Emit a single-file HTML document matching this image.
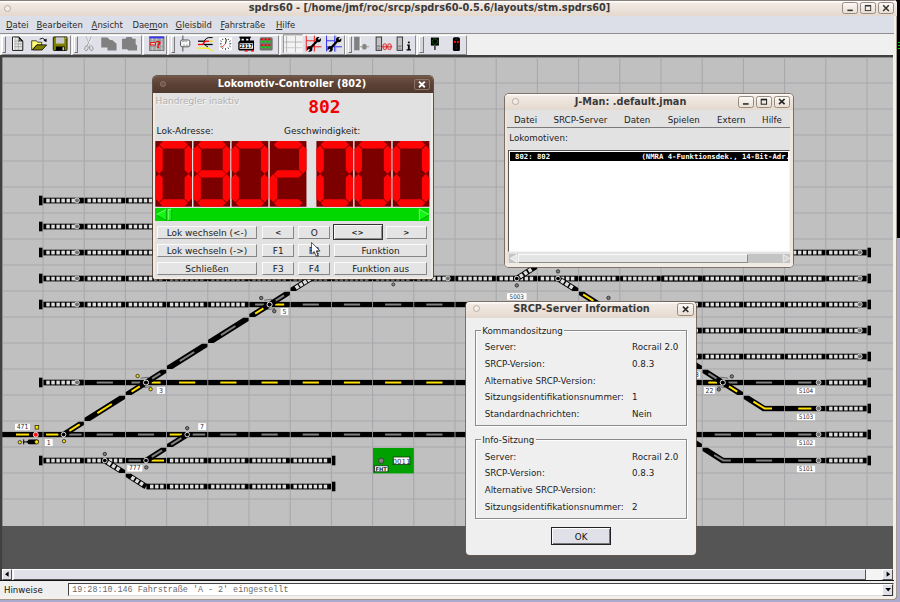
<!DOCTYPE html>
<html lang="de"><head><meta charset="utf-8"><title>spdrs60</title>
<style>
*{box-sizing:border-box;margin:0;padding:0}
html,body{width:900px;height:602px;overflow:hidden}
body{position:relative;background:#a9aace;font-family:"DejaVu Sans","Liberation Sans",sans-serif;font-size:8.4px;color:#1a1a1a;line-height:1}
.abs,.abs div,.abs svg{position:absolute}
.t{position:absolute;white-space:pre;line-height:1}
u{text-decoration:underline;text-underline-offset:1.1px;text-decoration-thickness:0.6px}
/* main window */
#bgblack{left:896px;top:0;width:4px;height:238px;background:#000}
#main{left:0;top:0;width:896.8px;height:600.2px;background:#f5f0ea;border-radius:0 4px 4px 0;overflow:hidden;box-shadow:inset -0.7px -0.7px 0 #8a7a6e}
#mtitle{left:0;top:0;width:897px;height:16.3px;background:linear-gradient(#fff 0,#fff 1px,#f1e9e3 2px,#ece3db 50%,#e5d9ce 100%);border-top:1px solid #8a8078}
#mtitle .cap{left:0;width:859px;top:2.2px;text-align:center;font-weight:bold;font-size:9.75px;color:#3a3a3a;white-space:pre}
.knob{width:7px;height:7px;border-radius:50%;border:1px solid #b9aca2;background:#f4ede7}
/*wbtn*/.wbtn{height:12.3px;width:16px;border:1px solid #978b82;border-radius:2.5px;background:linear-gradient(#fbf8f5,#e9dfd5)}
#menubar{left:0;top:16.3px;width:893.6px;height:17.1px;background:#dddfe8}
#menubar .t{top:4.6px;font-size:8.45px;color:#2a2a2a}
#tbarea{left:0;top:33.4px;width:893.6px;height:21.4px;background:#f0f0f0;border-top:1px solid #8f8f8f}
.tb{top:0.6px;height:20.2px;background:#dfe0e8;border-left:1px solid #fff;border-top:1px solid #fff;border-right:1px solid #8a8a8a;border-bottom:1px solid #8a8a8a}
.grip{top:1.6px;width:4.3px;height:16.6px;border-left:1.3px solid #fff;border-top:0.6px solid #fff;border-right:0.9px solid #7c7c7c;border-bottom:0.8px solid #707070;background:#d6d6da}
#canvas{left:0;top:54.6px;width:893.4px;overflow:hidden;height:515px;background:#c0c0c0}
#dark{left:0;top:525px;width:894px;height:45px;background:#555}
#hscroll{left:2px;top:569.4px;width:891px;height:11px;background:#f4f4f4}
#status{left:0;top:580.4px;width:893.6px;height:16.4px;background:#efefef;border-top:1.2px solid #111}
</style></head><body>
<div id="bgblack" class="abs"><div style="left:1.6px;top:42px;width:2.4px;height:0.9px;background:#0c0"></div><div style="left:1.6px;top:44.8px;width:2.4px;height:0.9px;background:#0c0"></div><div style="left:1.6px;top:47.6px;width:2.4px;height:0.9px;background:#0c0"></div></div>
<div id="main" class="abs">
  <div id="mtitle"><div class="knob" style="left:4.4px;top:4px"></div>
    <div class="cap">spdrs60 - [/home/jmf/roc/srcp/spdrs60-0.5.6/layouts/stm.spdrs60]</div>
    <div class="wbtn" style="left:841.6px;top:1px"><svg width="16" height="12" style="left:-1px;top:-1px"><rect x="5.4" y="7.6" width="5.4" height="1.5" fill="#333"/></svg></div>
    <div class="wbtn" style="left:859.6px;top:1px"><svg width="16" height="12" style="left:-1px;top:-1px"><rect x="5.3" y="3.4" width="5.4" height="5.2" fill="none" stroke="#333" stroke-width="0.9"/><rect x="5.3" y="3" width="5.4" height="1.5" fill="#333"/></svg></div>
    <div class="wbtn" style="left:877.8px;top:1px"><svg width="16" height="12" style="left:-1px;top:-1px"><path d="M5.2,3.2 L10.8,9 M10.8,3.2 L5.2,9" stroke="#333" stroke-width="1.5"/></svg></div>
  </div>
  <div id="menubar">
    <span class="t" style="left:6px"><u>D</u>atei</span>
    <span class="t" style="left:36.5px"><u>B</u>earbeiten</span>
    <span class="t" style="left:91.6px"><u>A</u>nsicht</span>
    <span class="t" style="left:132.4px">Dae<u>m</u>on</span>
    <span class="t" style="left:175.6px"><u>G</u>leisbild</span>
    <span class="t" style="left:220.4px"><u>F</u>ahrstraße</span>
    <span class="t" style="left:276px"><u>H</u>ilfe</span>
  </div>
  <div id="tbarea">
    <div class="tb" style="left:0.6px;width:70.6px"></div>
    <div class="tb" style="left:71.6px;width:70.6px"></div>
    <div class="tb" style="left:142.6px;width:24.6px"></div>
    <div class="tb" style="left:167.6px;width:111.6px"></div>
    <div class="tb" style="left:279.6px;width:65px"></div>
    <div class="tb" style="left:345px;width:71.4px"></div>
    <div class="tb" style="left:416.8px;width:50.4px"></div>
    <div class="grip" style="left:2.1px"></div>
    <div class="grip" style="left:74px"></div>
    <div class="grip" style="left:171px"></div>
    <div class="grip" style="left:348px"></div>
    <div class="grip" style="left:419.4px"></div>
    <svg width="470" height="21.4" viewBox="0 33.4 470 21.4" style="left:0;top:-1px" font-family="DejaVu Sans, Liberation Sans, sans-serif">
<!-- 1 new -->
<path d="M12.5,37.4 H18.8 L22.7,41.4 V50.8 H12.5 Z" fill="#e6e6e6" stroke="#000" stroke-width="0.9"/>
<rect x="13" y="37.9" width="1.5" height="12.4" fill="#fff"/>
<path d="M14.6,41.5 H22.2 M14.6,44.3 H22.2 M14.6,47.1 H22.2" stroke="#8e8e8e" stroke-width="0.7"/>
<path d="M14.8,38 V50.3 M18.4,41.6 V50.3" stroke="#9a9a9a" stroke-width="0.6"/>
<path d="M18.6,37.3 L22.8,41.6 H18.6 Z" fill="#000"/><path d="M19.4,39.4 L21,41 H19.4 Z" fill="#fff"/>
<!-- 2 open -->
<path d="M31.6,50.6 V41.2 H36.4 L37.4,42.6 H41.6 V45.4 H36.6 Z" fill="#ffff78" stroke="#000" stroke-width="0.7"/>
<path d="M32.4,50.4 L36.8,45.3 H46.6 L42,50.4 Z" fill="#808000" stroke="#000" stroke-width="0.8"/>
<path d="M39.6,39.6 Q42.4,37.4 45,40.2" fill="none" stroke="#000" stroke-width="0.9"/>
<path d="M43.4,41.2 L46.6,38.8 L46.4,42.4 Z" fill="#000"/>
<!-- 3 save -->
<rect x="53.2" y="37.3" width="13.8" height="13.6" rx="0.8" fill="#808000" stroke="#000" stroke-width="0.8"/>
<rect x="55.8" y="37.8" width="8.4" height="6.2" fill="#c8c8cc"/>
<rect x="55.8" y="46.9" width="8.8" height="4" fill="#000"/>
<rect x="62.4" y="47.6" width="1.6" height="3" fill="#c8c8c8"/>
<rect x="65.2" y="38" width="1" height="1" fill="#e8e8c0"/>
<!-- 4 cut -->
<g fill="none" stroke="#8e8e8e" stroke-width="0.8"><path d="M86.2,37.2 L90.4,46.6 M91.2,37.2 L87,46.6"/><ellipse cx="86.4" cy="48.6" rx="1.6" ry="2.6" transform="rotate(20 86.4 48.6)"/><ellipse cx="91.2" cy="48.6" rx="1.6" ry="2.6" transform="rotate(-20 91.2 48.6)"/></g>
<g fill="none" stroke="#fff" stroke-width="0.6"><path d="M86.9,37.6 L91.1,47 M91.9,37.6 L87.7,47"/></g>
<!-- 5 copy -->
<path d="M101.2,37.8 H107.4 L110,40.5 H112.2 L116.5,44.2 V51 H107.4 V48 H101.2 Z" fill="#808080"/>
<!-- 6 paste -->
<path d="M122,39.2 H125.4 L126.6,37.4 H131.4 L132.6,39.2 H135.6 V44.6 L137,46 V51 H128.2 L127.2,49.6 H122 Z" fill="#808080"/>
<!-- 7 help -->
<rect x="149.6" y="37.2" width="14.4" height="13.8" fill="#a4a4a4" stroke="#505050" stroke-width="0.6"/>
<rect x="149.6" y="37" width="14.4" height="1.8" fill="#3434ff"/>
<path d="M152.4,39 V50.6 M156.6,39 V50.6 M161.6,39 V50.6" stroke="#c4c4c4" stroke-width="1.4"/>
<path d="M150,41.4 H163.6 M150,46.8 H163.6" stroke="#8a8a8a" stroke-width="0.6"/>
<rect x="150.6" y="43" width="4.8" height="2.4" fill="#d8d8d8" stroke="#f00000" stroke-width="0.9"/>
<text x="158.4" y="48.2" font-size="9.6" font-weight="bold" fill="#f00000" text-anchor="middle">?</text>
<!-- 8 object -->
<path d="M182.8,36 V51.8" stroke="#6c6c6c" stroke-width="1.2"/>
<rect x="180.5" y="40.4" width="9.3" height="6.8" rx="1.6" fill="#f6f6f6" stroke="#5a5a5a" stroke-width="1"/>
<path d="M182,42 H184.6 M185.4,42 H187 M183,45.6 H185 M186,45.6 H188.4" stroke="#707070" stroke-width="0.6"/>
<!-- 9 tracks -->
<g fill="none" stroke-width="1.3">
<path d="M198,41.6 H204.6" stroke="#000"/><path d="M204.4,41.6 H209" stroke="#f00000"/><path d="M209,41.6 H212.6" stroke="#f0e000"/>
<path d="M204.2,41.4 Q206.2,38.2 208.4,38 H212.6" stroke="#000" stroke-width="1"/>
<path d="M198,44.9 H203" stroke="#f00000"/><path d="M202.6,44.9 L205.2,41.6" stroke="#f00000"/><path d="M203.6,44.9 H212.6" stroke="#000"/>
<path d="M205,45 Q206.4,47.2 208,47.4" stroke="#000" stroke-width="1"/>
<path d="M198,48.5 H207.6 Q209.2,48.8 210.2,50 Q211.2,51 212.6,51" stroke="#f6ee00"/>
</g>
<!-- 10 clock -->
<rect x="219" y="37.8" width="12.9" height="12.9" fill="#fff"/>
<g stroke="#000" stroke-width="0.8">
<path d="M225.5,38.4 V40 M225.5,48.6 V50.2 M219.8,44.2 H221.6 M229.4,44.2 H231.2 M222.4,39.2 L223,40.4 M228.6,39.2 L228,40.4 M220.4,41.2 L221.6,41.9 M230.6,41.2 L229.4,41.9 M220.4,47.2 L221.6,46.5 M230.6,47.2 L229.4,46.5 M222.4,49.2 L223,48 M228.6,49.2 L228,48"/>
<path d="M225.5,44.2 L226.4,39.8" stroke-width="0.9"/></g>
<path d="M225.6,44.2 L221.4,48" stroke="#f03030" stroke-width="0.9"/>
<!-- 11 loco -->
<rect x="239.4" y="37" width="11.4" height="1.6" fill="#000"/>
<rect x="240.2" y="38" width="9.8" height="5" fill="#000"/>
<rect x="241.6" y="39.2" width="2.2" height="2.2" fill="#fff"/><rect x="246.2" y="39.2" width="2.2" height="2.2" fill="#fff"/>
<path d="M238.3,43 L240,41 H254 V51 H239.4 L238.3,49.8 Z" fill="#000"/>
<rect x="239.6" y="43.7" width="13.4" height="5.5" fill="#fff"/>
<text x="239.8" y="48.8" font-size="5.6" font-weight="bold" fill="#000" textLength="13" lengthAdjust="spacingAndGlyphs">2317</text>
<path d="M244.2,52 L245.8,50.2 H246.6 L248.2,52 Z M250.8,52 L252.2,50.2 H254 V52 Z" fill="#f00000"/>
<!-- 12 leds -->
<rect x="259.7" y="37.7" width="13" height="13.2" rx="1.6" fill="#727272"/>
<g fill="#f00000"><rect x="260.9" y="38.9" width="2.2" height="1.6"/><rect x="264.6" y="38.9" width="2.2" height="1.6"/><rect x="268.2" y="38.9" width="2.2" height="1.6"/><rect x="260.9" y="44.7" width="2.2" height="1.6"/><rect x="264.6" y="44.7" width="2.2" height="1.6"/><rect x="268.2" y="44.7" width="2.2" height="1.6"/></g>
<g fill="#00e000"><rect x="260.9" y="41.2" width="2.2" height="1.7"/><rect x="264.6" y="41.2" width="2.2" height="1.7"/><rect x="268.2" y="41.2" width="2.2" height="1.7"/><rect x="260.9" y="46.9" width="2.2" height="1.7"/><rect x="264.6" y="46.9" width="2.2" height="1.7"/><rect x="268.2" y="46.9" width="2.2" height="1.7"/></g>
<!-- 13 grid toggle -->
<rect x="283.4" y="35.2" width="19.3" height="18" fill="#f3f3f3"/>
<path d="M283.4,53.2 V35.2 H302.7" fill="none" stroke="#808080" stroke-width="0.9"/>
<path d="M286.6,36.4 V52.6 M295.5,36.4 V52.6" stroke="#a8a8a8" stroke-width="0.8"/>
<path d="M284.4,42.4 H302.2" stroke="#a8a8a8" stroke-width="0.8"/><path d="M284.4,48.1 H302.2" stroke="#c4c4c4" stroke-width="0.8"/>
<!-- 14 red wrench -->
<g stroke="#f01010" stroke-width="0.9" fill="none"><path d="M306.3,36 V52 M314.4,36 V52 M306.3,41.2 H314.4 M306.3,47.2 H321.6"/></g>
<g><path d="M309.8,49.2 L318.2,40.2" stroke="#000" stroke-width="2.2" fill="none"/>
<circle cx="318.3" cy="40" r="2.7" fill="#000"/><path d="M318.5,39.8 L321.4,36.9" stroke="#dfe0e8" stroke-width="1.5"/>
<circle cx="309.7" cy="49.4" r="2.7" fill="#000"/><path d="M309.5,49.6 L306.6,52.5" stroke="#dfe0e8" stroke-width="1.5"/></g>
<!-- 15 blue wrench -->
<g stroke="#2020f0" stroke-width="0.9" fill="none"><path d="M326.6,36 V52 M334.8,36 V52 M326.6,41.2 H334.8 M326.6,47.2 H342"/></g>
<path d="M335.8,36 V52" stroke="#8a8af0" stroke-width="0.8"/>
<g transform="translate(20.4 0)"><path d="M309.8,49.2 L318.2,40.2" stroke="#000" stroke-width="2.2" fill="none"/>
<circle cx="318.3" cy="40" r="2.7" fill="#000"/><path d="M318.5,39.8 L321.4,36.9" stroke="#dfe0e8" stroke-width="1.5"/>
<circle cx="309.7" cy="49.4" r="2.7" fill="#000"/><path d="M309.5,49.6 L306.6,52.5" stroke="#dfe0e8" stroke-width="1.5"/></g>
<!-- 16 -->
<rect x="354.2" y="37.2" width="5.6" height="13.5" fill="#808080"/><path d="M360.3,37.4 V50.6" stroke="#fff" stroke-width="0.9"/>
<path d="M360,47.2 H369.2" stroke="#8a8a8a" stroke-width="0.8"/><rect x="362.4" y="44.4" width="4.2" height="5.6" rx="1.6" fill="#858585"/>
<!-- 17 -->
<rect x="376.2" y="37.4" width="5.4" height="13.4" fill="#c2c2c2" stroke="#3c3c3c" stroke-width="1"/>
<rect x="377.2" y="46" width="3.4" height="1" fill="#6a6a6a"/><rect x="377.6" y="48" width="2.6" height="2" fill="#9a9a9a"/>
<g fill="#e0c0c0" stroke="#e01010" stroke-width="0.8"><rect x="383.2" y="44.2" width="3.4" height="5.8" rx="1.5"/><rect x="387.8" y="44.2" width="3.4" height="5.8" rx="1.5"/><path d="M382,47.2 H392.4"/></g>
<!-- 18 -->
<rect x="397.2" y="37.4" width="5.4" height="13.4" fill="#c2c2c2" stroke="#3c3c3c" stroke-width="1"/>
<rect x="398.2" y="46" width="3.4" height="1" fill="#6a6a6a"/><rect x="398.6" y="48" width="2.6" height="2" fill="#9a9a9a"/>
<rect x="408" y="42" width="1.8" height="1.7" fill="#000"/><path d="M407.2,45 H409.8 V49.6 H411 V50.9 H406.6 V49.6 H408 V46.2 H407.2 Z" fill="#000"/>
<!-- 19 green signal -->
<rect x="431" y="38" width="8" height="8" fill="#000"/><circle cx="435" cy="42" r="2.7" fill="none" stroke="#10a010" stroke-width="0.9" stroke-dasharray="1.2 0.6"/>
<rect x="434.2" y="46" width="1.6" height="4.4" fill="#3a3a3a"/>
<!-- 20 red signal -->
<rect x="453" y="37.6" width="7" height="13.8" rx="1.6" fill="#000"/>
<circle cx="455" cy="42.4" r="1.15" fill="#f01010"/><circle cx="458" cy="42.4" r="1.15" fill="#f01010"/>
<path d="M455.4,39.6 H457.6 M456.4,45.2 V46.6 M455.6,48.6 H457.4" stroke="#4a4a4a" stroke-width="0.7"/>
</svg>

  </div>
  <div id="canvas">
    <svg width="894" height="515" viewBox="0 54.6 894 515" style="left:0;top:0" font-family="DejaVu Sans, Liberation Sans, sans-serif">
      <rect x="0" y="54.6" width="894" height="2.4" fill="#404040"/>
      <rect x="0" y="54.6" width="2.2" height="515" fill="#404040"/>
      <rect x="42.50" y="57" width="1" height="469" fill="#a7a7ab"/>
<rect x="83.70" y="57" width="1" height="469" fill="#a7a7ab"/>
<rect x="124.90" y="57" width="1" height="469" fill="#a7a7ab"/>
<rect x="166.10" y="57" width="1" height="469" fill="#a7a7ab"/>
<rect x="207.30" y="57" width="1" height="469" fill="#a7a7ab"/>
<rect x="248.50" y="57" width="1" height="469" fill="#a7a7ab"/>
<rect x="289.70" y="57" width="1" height="469" fill="#a7a7ab"/>
<rect x="330.90" y="57" width="1" height="469" fill="#a7a7ab"/>
<rect x="372.10" y="57" width="1" height="469" fill="#a7a7ab"/>
<rect x="413.30" y="57" width="1" height="469" fill="#a7a7ab"/>
<rect x="454.50" y="57" width="1" height="469" fill="#a7a7ab"/>
<rect x="495.70" y="57" width="1" height="469" fill="#a7a7ab"/>
<rect x="536.90" y="57" width="1" height="469" fill="#a7a7ab"/>
<rect x="578.10" y="57" width="1" height="469" fill="#a7a7ab"/>
<rect x="619.30" y="57" width="1" height="469" fill="#a7a7ab"/>
<rect x="660.50" y="57" width="1" height="469" fill="#a7a7ab"/>
<rect x="701.70" y="57" width="1" height="469" fill="#a7a7ab"/>
<rect x="742.90" y="57" width="1" height="469" fill="#a7a7ab"/>
<rect x="784.10" y="57" width="1" height="469" fill="#a7a7ab"/>
<rect x="825.30" y="57" width="1" height="469" fill="#a7a7ab"/>
<rect x="866.50" y="57" width="1" height="469" fill="#a7a7ab"/>
<rect x="2" y="82.10" width="892" height="1" fill="#a7a7ab"/>
<rect x="2" y="108.10" width="892" height="1" fill="#a7a7ab"/>
<rect x="2" y="134.10" width="892" height="1" fill="#a7a7ab"/>
<rect x="2" y="160.10" width="892" height="1" fill="#a7a7ab"/>
<rect x="2" y="186.10" width="892" height="1" fill="#a7a7ab"/>
<rect x="2" y="212.10" width="892" height="1" fill="#a7a7ab"/>
<rect x="2" y="238.10" width="892" height="1" fill="#a7a7ab"/>
<rect x="2" y="264.10" width="892" height="1" fill="#a7a7ab"/>
<rect x="2" y="290.10" width="892" height="1" fill="#a7a7ab"/>
<rect x="2" y="316.10" width="892" height="1" fill="#a7a7ab"/>
<rect x="2" y="342.10" width="892" height="1" fill="#a7a7ab"/>
<rect x="2" y="368.10" width="892" height="1" fill="#a7a7ab"/>
<rect x="2" y="394.10" width="892" height="1" fill="#a7a7ab"/>
<rect x="2" y="420.10" width="892" height="1" fill="#a7a7ab"/>
<rect x="2" y="446.10" width="892" height="1" fill="#a7a7ab"/>
<rect x="2" y="472.10" width="892" height="1" fill="#a7a7ab"/>
<rect x="2" y="498.10" width="892" height="1" fill="#a7a7ab"/>
      <rect x="0" y="525.6" width="894" height="45" fill="#555"/>
      <rect x="0" y="54.6" width="2.2" height="515" fill="#404040"/>
      <rect x="39.00" y="195.30" width="3.5" height="9.6" fill="#000"/>
<rect x="43.40" y="197.30" width="40.40" height="5.7" fill="#000"/>
<rect x="46.27" y="198.25" width="3.45" height="3.8" fill="#dedede"/>
<rect x="51.32" y="198.25" width="3.45" height="3.8" fill="#dedede"/>
<rect x="56.38" y="198.25" width="3.45" height="3.8" fill="#dedede"/>
<rect x="61.42" y="198.25" width="3.45" height="3.8" fill="#dedede"/>
<rect x="66.48" y="198.25" width="3.45" height="3.8" fill="#dedede"/>
<rect x="71.53" y="198.25" width="3.45" height="3.8" fill="#dedede"/>
<circle cx="77.00" cy="200.00" r="2.4" fill="#707070" stroke="#dedede" stroke-width="0.9"/>
<rect x="84.60" y="197.30" width="40.40" height="5.7" fill="#000"/>
<rect x="87.48" y="198.25" width="3.45" height="3.8" fill="#dedede"/>
<rect x="92.52" y="198.25" width="3.45" height="3.8" fill="#dedede"/>
<rect x="97.56" y="198.25" width="3.45" height="3.8" fill="#dedede"/>
<rect x="102.60" y="198.25" width="3.45" height="3.8" fill="#dedede"/>
<rect x="107.64" y="198.25" width="3.45" height="3.8" fill="#dedede"/>
<rect x="112.68" y="198.25" width="3.45" height="3.8" fill="#dedede"/>
<rect x="117.72" y="198.25" width="3.45" height="3.8" fill="#dedede"/>
<rect x="125.80" y="197.30" width="40.40" height="5.7" fill="#000"/>
<rect x="128.68" y="198.25" width="3.45" height="3.8" fill="#dedede"/>
<rect x="133.72" y="198.25" width="3.45" height="3.8" fill="#dedede"/>
<rect x="138.76" y="198.25" width="3.45" height="3.8" fill="#dedede"/>
<rect x="143.80" y="198.25" width="3.45" height="3.8" fill="#dedede"/>
<rect x="148.84" y="198.25" width="3.45" height="3.8" fill="#dedede"/>
<rect x="153.88" y="198.25" width="3.45" height="3.8" fill="#dedede"/>
<rect x="158.92" y="198.25" width="3.45" height="3.8" fill="#dedede"/>
<rect x="167.00" y="197.30" width="40.40" height="5.7" fill="#000"/>
<rect x="169.88" y="198.25" width="3.45" height="3.8" fill="#dedede"/>
<rect x="174.92" y="198.25" width="3.45" height="3.8" fill="#dedede"/>
<rect x="179.96" y="198.25" width="3.45" height="3.8" fill="#dedede"/>
<rect x="185.00" y="198.25" width="3.45" height="3.8" fill="#dedede"/>
<rect x="190.04" y="198.25" width="3.45" height="3.8" fill="#dedede"/>
<rect x="195.08" y="198.25" width="3.45" height="3.8" fill="#dedede"/>
<rect x="200.12" y="198.25" width="3.45" height="3.8" fill="#dedede"/>
<rect x="208.20" y="197.30" width="40.40" height="5.7" fill="#000"/>
<rect x="211.08" y="198.25" width="3.45" height="3.8" fill="#dedede"/>
<rect x="216.12" y="198.25" width="3.45" height="3.8" fill="#dedede"/>
<rect x="221.16" y="198.25" width="3.45" height="3.8" fill="#dedede"/>
<rect x="226.20" y="198.25" width="3.45" height="3.8" fill="#dedede"/>
<rect x="231.24" y="198.25" width="3.45" height="3.8" fill="#dedede"/>
<rect x="236.28" y="198.25" width="3.45" height="3.8" fill="#dedede"/>
<rect x="241.32" y="198.25" width="3.45" height="3.8" fill="#dedede"/>
<rect x="39.00" y="221.30" width="3.5" height="9.6" fill="#000"/>
<rect x="43.40" y="223.30" width="40.40" height="5.7" fill="#000"/>
<rect x="46.27" y="224.25" width="3.45" height="3.8" fill="#dedede"/>
<rect x="51.32" y="224.25" width="3.45" height="3.8" fill="#dedede"/>
<rect x="56.38" y="224.25" width="3.45" height="3.8" fill="#dedede"/>
<rect x="61.42" y="224.25" width="3.45" height="3.8" fill="#dedede"/>
<rect x="66.48" y="224.25" width="3.45" height="3.8" fill="#dedede"/>
<rect x="71.53" y="224.25" width="3.45" height="3.8" fill="#dedede"/>
<circle cx="77.00" cy="226.00" r="2.4" fill="#707070" stroke="#dedede" stroke-width="0.9"/>
<rect x="84.60" y="223.30" width="40.40" height="5.7" fill="#000"/>
<rect x="87.48" y="224.25" width="3.45" height="3.8" fill="#dedede"/>
<rect x="92.52" y="224.25" width="3.45" height="3.8" fill="#dedede"/>
<rect x="97.56" y="224.25" width="3.45" height="3.8" fill="#dedede"/>
<rect x="102.60" y="224.25" width="3.45" height="3.8" fill="#dedede"/>
<rect x="107.64" y="224.25" width="3.45" height="3.8" fill="#dedede"/>
<rect x="112.68" y="224.25" width="3.45" height="3.8" fill="#dedede"/>
<rect x="117.72" y="224.25" width="3.45" height="3.8" fill="#dedede"/>
<rect x="125.80" y="223.30" width="40.40" height="5.7" fill="#000"/>
<rect x="128.68" y="224.25" width="3.45" height="3.8" fill="#dedede"/>
<rect x="133.72" y="224.25" width="3.45" height="3.8" fill="#dedede"/>
<rect x="138.76" y="224.25" width="3.45" height="3.8" fill="#dedede"/>
<rect x="143.80" y="224.25" width="3.45" height="3.8" fill="#dedede"/>
<rect x="148.84" y="224.25" width="3.45" height="3.8" fill="#dedede"/>
<rect x="153.88" y="224.25" width="3.45" height="3.8" fill="#dedede"/>
<rect x="158.92" y="224.25" width="3.45" height="3.8" fill="#dedede"/>
<rect x="167.00" y="223.30" width="40.40" height="5.7" fill="#000"/>
<rect x="169.88" y="224.25" width="3.45" height="3.8" fill="#dedede"/>
<rect x="174.92" y="224.25" width="3.45" height="3.8" fill="#dedede"/>
<rect x="179.96" y="224.25" width="3.45" height="3.8" fill="#dedede"/>
<rect x="185.00" y="224.25" width="3.45" height="3.8" fill="#dedede"/>
<rect x="190.04" y="224.25" width="3.45" height="3.8" fill="#dedede"/>
<rect x="195.08" y="224.25" width="3.45" height="3.8" fill="#dedede"/>
<rect x="200.12" y="224.25" width="3.45" height="3.8" fill="#dedede"/>
<rect x="208.20" y="223.30" width="40.40" height="5.7" fill="#000"/>
<rect x="211.08" y="224.25" width="3.45" height="3.8" fill="#dedede"/>
<rect x="216.12" y="224.25" width="3.45" height="3.8" fill="#dedede"/>
<rect x="221.16" y="224.25" width="3.45" height="3.8" fill="#dedede"/>
<rect x="226.20" y="224.25" width="3.45" height="3.8" fill="#dedede"/>
<rect x="231.24" y="224.25" width="3.45" height="3.8" fill="#dedede"/>
<rect x="236.28" y="224.25" width="3.45" height="3.8" fill="#dedede"/>
<rect x="241.32" y="224.25" width="3.45" height="3.8" fill="#dedede"/>
<rect x="39.00" y="247.30" width="3.5" height="9.6" fill="#000"/>
<rect x="43.40" y="249.30" width="40.40" height="5.7" fill="#000"/>
<rect x="46.27" y="250.25" width="3.45" height="3.8" fill="#dedede"/>
<rect x="51.32" y="250.25" width="3.45" height="3.8" fill="#dedede"/>
<rect x="56.38" y="250.25" width="3.45" height="3.8" fill="#dedede"/>
<rect x="61.42" y="250.25" width="3.45" height="3.8" fill="#dedede"/>
<rect x="66.48" y="250.25" width="3.45" height="3.8" fill="#dedede"/>
<rect x="71.53" y="250.25" width="3.45" height="3.8" fill="#dedede"/>
<circle cx="77.00" cy="252.00" r="2.4" fill="#707070" stroke="#dedede" stroke-width="0.9"/>
<rect x="84.60" y="249.30" width="40.40" height="5.7" fill="#000"/>
<rect x="87.48" y="250.25" width="3.45" height="3.8" fill="#dedede"/>
<rect x="92.52" y="250.25" width="3.45" height="3.8" fill="#dedede"/>
<rect x="97.56" y="250.25" width="3.45" height="3.8" fill="#dedede"/>
<rect x="102.60" y="250.25" width="3.45" height="3.8" fill="#dedede"/>
<rect x="107.64" y="250.25" width="3.45" height="3.8" fill="#dedede"/>
<rect x="112.68" y="250.25" width="3.45" height="3.8" fill="#dedede"/>
<rect x="117.72" y="250.25" width="3.45" height="3.8" fill="#dedede"/>
<rect x="125.80" y="249.30" width="40.40" height="5.7" fill="#000"/>
<rect x="128.68" y="250.25" width="3.45" height="3.8" fill="#dedede"/>
<rect x="133.72" y="250.25" width="3.45" height="3.8" fill="#dedede"/>
<rect x="138.76" y="250.25" width="3.45" height="3.8" fill="#dedede"/>
<rect x="143.80" y="250.25" width="3.45" height="3.8" fill="#dedede"/>
<rect x="148.84" y="250.25" width="3.45" height="3.8" fill="#dedede"/>
<rect x="153.88" y="250.25" width="3.45" height="3.8" fill="#dedede"/>
<rect x="158.92" y="250.25" width="3.45" height="3.8" fill="#dedede"/>
<rect x="167.00" y="249.30" width="40.40" height="5.7" fill="#000"/>
<rect x="169.88" y="250.25" width="3.45" height="3.8" fill="#dedede"/>
<rect x="174.92" y="250.25" width="3.45" height="3.8" fill="#dedede"/>
<rect x="179.96" y="250.25" width="3.45" height="3.8" fill="#dedede"/>
<rect x="185.00" y="250.25" width="3.45" height="3.8" fill="#dedede"/>
<rect x="190.04" y="250.25" width="3.45" height="3.8" fill="#dedede"/>
<rect x="195.08" y="250.25" width="3.45" height="3.8" fill="#dedede"/>
<rect x="200.12" y="250.25" width="3.45" height="3.8" fill="#dedede"/>
<rect x="208.20" y="249.30" width="40.40" height="5.7" fill="#000"/>
<rect x="211.08" y="250.25" width="3.45" height="3.8" fill="#dedede"/>
<rect x="216.12" y="250.25" width="3.45" height="3.8" fill="#dedede"/>
<rect x="221.16" y="250.25" width="3.45" height="3.8" fill="#dedede"/>
<rect x="226.20" y="250.25" width="3.45" height="3.8" fill="#dedede"/>
<rect x="231.24" y="250.25" width="3.45" height="3.8" fill="#dedede"/>
<rect x="236.28" y="250.25" width="3.45" height="3.8" fill="#dedede"/>
<rect x="241.32" y="250.25" width="3.45" height="3.8" fill="#dedede"/>
<rect x="39.00" y="273.30" width="3.5" height="9.6" fill="#000"/>
<rect x="43.40" y="275.30" width="40.40" height="5.7" fill="#000"/>
<rect x="46.27" y="276.25" width="3.45" height="3.8" fill="#dedede"/>
<rect x="51.32" y="276.25" width="3.45" height="3.8" fill="#dedede"/>
<rect x="56.38" y="276.25" width="3.45" height="3.8" fill="#dedede"/>
<rect x="61.42" y="276.25" width="3.45" height="3.8" fill="#dedede"/>
<rect x="66.48" y="276.25" width="3.45" height="3.8" fill="#dedede"/>
<rect x="71.53" y="276.25" width="3.45" height="3.8" fill="#dedede"/>
<circle cx="77.00" cy="278.00" r="2.4" fill="#707070" stroke="#dedede" stroke-width="0.9"/>
<rect x="84.60" y="275.30" width="40.40" height="5.7" fill="#000"/>
<rect x="87.48" y="276.25" width="3.45" height="3.8" fill="#dedede"/>
<rect x="92.52" y="276.25" width="3.45" height="3.8" fill="#dedede"/>
<rect x="97.56" y="276.25" width="3.45" height="3.8" fill="#dedede"/>
<rect x="102.60" y="276.25" width="3.45" height="3.8" fill="#dedede"/>
<rect x="107.64" y="276.25" width="3.45" height="3.8" fill="#dedede"/>
<rect x="112.68" y="276.25" width="3.45" height="3.8" fill="#dedede"/>
<rect x="117.72" y="276.25" width="3.45" height="3.8" fill="#dedede"/>
<rect x="125.80" y="275.30" width="40.40" height="5.7" fill="#000"/>
<rect x="128.68" y="276.25" width="3.45" height="3.8" fill="#dedede"/>
<rect x="133.72" y="276.25" width="3.45" height="3.8" fill="#dedede"/>
<rect x="138.76" y="276.25" width="3.45" height="3.8" fill="#dedede"/>
<rect x="143.80" y="276.25" width="3.45" height="3.8" fill="#dedede"/>
<rect x="148.84" y="276.25" width="3.45" height="3.8" fill="#dedede"/>
<rect x="153.88" y="276.25" width="3.45" height="3.8" fill="#dedede"/>
<rect x="158.92" y="276.25" width="3.45" height="3.8" fill="#dedede"/>
<rect x="167.00" y="275.30" width="40.40" height="5.7" fill="#000"/>
<rect x="169.88" y="276.25" width="3.45" height="3.8" fill="#dedede"/>
<rect x="174.92" y="276.25" width="3.45" height="3.8" fill="#dedede"/>
<rect x="179.96" y="276.25" width="3.45" height="3.8" fill="#dedede"/>
<rect x="185.00" y="276.25" width="3.45" height="3.8" fill="#dedede"/>
<rect x="190.04" y="276.25" width="3.45" height="3.8" fill="#dedede"/>
<rect x="195.08" y="276.25" width="3.45" height="3.8" fill="#dedede"/>
<rect x="200.12" y="276.25" width="3.45" height="3.8" fill="#dedede"/>
<rect x="208.20" y="275.30" width="40.40" height="5.7" fill="#000"/>
<rect x="211.08" y="276.25" width="3.45" height="3.8" fill="#dedede"/>
<rect x="216.12" y="276.25" width="3.45" height="3.8" fill="#dedede"/>
<rect x="221.16" y="276.25" width="3.45" height="3.8" fill="#dedede"/>
<rect x="226.20" y="276.25" width="3.45" height="3.8" fill="#dedede"/>
<rect x="231.24" y="276.25" width="3.45" height="3.8" fill="#dedede"/>
<rect x="236.28" y="276.25" width="3.45" height="3.8" fill="#dedede"/>
<rect x="241.32" y="276.25" width="3.45" height="3.8" fill="#dedede"/>
<rect x="249.40" y="275.30" width="40.40" height="5.7" fill="#000"/>
<rect x="252.28" y="276.25" width="3.45" height="3.8" fill="#dedede"/>
<rect x="257.31" y="276.25" width="3.45" height="3.8" fill="#dedede"/>
<rect x="262.36" y="276.25" width="3.45" height="3.8" fill="#dedede"/>
<rect x="267.39" y="276.25" width="3.45" height="3.8" fill="#dedede"/>
<rect x="272.44" y="276.25" width="3.45" height="3.8" fill="#dedede"/>
<rect x="277.48" y="276.25" width="3.45" height="3.8" fill="#dedede"/>
<rect x="282.51" y="276.25" width="3.45" height="3.8" fill="#dedede"/>
<rect x="290.60" y="275.30" width="40.40" height="5.7" fill="#000"/>
<rect x="293.48" y="276.25" width="3.45" height="3.8" fill="#dedede"/>
<rect x="298.52" y="276.25" width="3.45" height="3.8" fill="#dedede"/>
<rect x="303.56" y="276.25" width="3.45" height="3.8" fill="#dedede"/>
<rect x="308.60" y="276.25" width="3.45" height="3.8" fill="#dedede"/>
<rect x="313.64" y="276.25" width="3.45" height="3.8" fill="#dedede"/>
<rect x="318.68" y="276.25" width="3.45" height="3.8" fill="#dedede"/>
<rect x="323.72" y="276.25" width="3.45" height="3.8" fill="#dedede"/>
<rect x="331.80" y="275.30" width="40.40" height="5.7" fill="#000"/>
<rect x="334.68" y="276.25" width="3.45" height="3.8" fill="#dedede"/>
<rect x="339.72" y="276.25" width="3.45" height="3.8" fill="#dedede"/>
<rect x="344.75" y="276.25" width="3.45" height="3.8" fill="#dedede"/>
<rect x="349.80" y="276.25" width="3.45" height="3.8" fill="#dedede"/>
<rect x="354.84" y="276.25" width="3.45" height="3.8" fill="#dedede"/>
<rect x="359.88" y="276.25" width="3.45" height="3.8" fill="#dedede"/>
<rect x="364.92" y="276.25" width="3.45" height="3.8" fill="#dedede"/>
<rect x="373.00" y="275.30" width="40.40" height="5.7" fill="#000"/>
<rect x="375.88" y="276.25" width="3.45" height="3.8" fill="#dedede"/>
<rect x="380.92" y="276.25" width="3.45" height="3.8" fill="#dedede"/>
<rect x="385.95" y="276.25" width="3.45" height="3.8" fill="#dedede"/>
<rect x="391.00" y="276.25" width="3.45" height="3.8" fill="#dedede"/>
<rect x="396.04" y="276.25" width="3.45" height="3.8" fill="#dedede"/>
<rect x="401.07" y="276.25" width="3.45" height="3.8" fill="#dedede"/>
<rect x="406.12" y="276.25" width="3.45" height="3.8" fill="#dedede"/>
<rect x="414.20" y="275.30" width="40.40" height="5.7" fill="#000"/>
<rect x="417.07" y="276.25" width="3.45" height="3.8" fill="#dedede"/>
<rect x="422.12" y="276.25" width="3.45" height="3.8" fill="#dedede"/>
<rect x="427.18" y="276.25" width="3.45" height="3.8" fill="#dedede"/>
<rect x="432.22" y="276.25" width="3.45" height="3.8" fill="#dedede"/>
<rect x="437.27" y="276.25" width="3.45" height="3.8" fill="#dedede"/>
<rect x="442.32" y="276.25" width="3.45" height="3.8" fill="#dedede"/>
<circle cx="447.80" cy="278.00" r="2.4" fill="#707070" stroke="#dedede" stroke-width="0.9"/>
<rect x="455.40" y="275.30" width="40.40" height="5.7" fill="#000"/>
<rect x="458.28" y="276.25" width="3.45" height="3.8" fill="#dedede"/>
<rect x="463.32" y="276.25" width="3.45" height="3.8" fill="#dedede"/>
<rect x="468.36" y="276.25" width="3.45" height="3.8" fill="#dedede"/>
<rect x="473.40" y="276.25" width="3.45" height="3.8" fill="#dedede"/>
<rect x="478.44" y="276.25" width="3.45" height="3.8" fill="#dedede"/>
<rect x="483.48" y="276.25" width="3.45" height="3.8" fill="#dedede"/>
<rect x="488.52" y="276.25" width="3.45" height="3.8" fill="#dedede"/>
<rect x="496.60" y="275.30" width="40.40" height="5.7" fill="#000"/>
<rect x="499.48" y="276.25" width="3.45" height="3.8" fill="#dedede"/>
<rect x="504.52" y="276.25" width="3.45" height="3.8" fill="#dedede"/>
<rect x="509.56" y="276.25" width="3.45" height="3.8" fill="#dedede"/>
<rect x="514.60" y="276.25" width="3.45" height="3.8" fill="#dedede"/>
<rect x="519.63" y="276.25" width="3.45" height="3.8" fill="#dedede"/>
<rect x="524.68" y="276.25" width="3.45" height="3.8" fill="#dedede"/>
<rect x="529.72" y="276.25" width="3.45" height="3.8" fill="#dedede"/>
<rect x="537.80" y="275.30" width="40.40" height="5.7" fill="#000"/>
<rect x="540.67" y="276.25" width="3.45" height="3.8" fill="#dedede"/>
<rect x="545.71" y="276.25" width="3.45" height="3.8" fill="#dedede"/>
<rect x="550.75" y="276.25" width="3.45" height="3.8" fill="#dedede"/>
<rect x="555.79" y="276.25" width="3.45" height="3.8" fill="#dedede"/>
<rect x="560.83" y="276.25" width="3.45" height="3.8" fill="#dedede"/>
<rect x="565.88" y="276.25" width="3.45" height="3.8" fill="#dedede"/>
<rect x="570.91" y="276.25" width="3.45" height="3.8" fill="#dedede"/>
<rect x="579.00" y="275.30" width="40.40" height="5.7" fill="#000"/>
<rect x="581.88" y="276.25" width="3.45" height="3.8" fill="#dedede"/>
<rect x="586.91" y="276.25" width="3.45" height="3.8" fill="#dedede"/>
<rect x="591.96" y="276.25" width="3.45" height="3.8" fill="#dedede"/>
<rect x="597.00" y="276.25" width="3.45" height="3.8" fill="#dedede"/>
<rect x="602.03" y="276.25" width="3.45" height="3.8" fill="#dedede"/>
<rect x="607.08" y="276.25" width="3.45" height="3.8" fill="#dedede"/>
<rect x="612.12" y="276.25" width="3.45" height="3.8" fill="#dedede"/>
<rect x="620.20" y="275.30" width="40.40" height="5.7" fill="#000"/>
<rect x="623.07" y="276.25" width="3.45" height="3.8" fill="#dedede"/>
<rect x="628.11" y="276.25" width="3.45" height="3.8" fill="#dedede"/>
<rect x="633.15" y="276.25" width="3.45" height="3.8" fill="#dedede"/>
<rect x="638.19" y="276.25" width="3.45" height="3.8" fill="#dedede"/>
<rect x="643.23" y="276.25" width="3.45" height="3.8" fill="#dedede"/>
<rect x="648.27" y="276.25" width="3.45" height="3.8" fill="#dedede"/>
<rect x="653.31" y="276.25" width="3.45" height="3.8" fill="#dedede"/>
<rect x="661.40" y="275.30" width="40.40" height="5.7" fill="#000"/>
<rect x="664.27" y="276.25" width="3.45" height="3.8" fill="#dedede"/>
<rect x="669.31" y="276.25" width="3.45" height="3.8" fill="#dedede"/>
<rect x="674.36" y="276.25" width="3.45" height="3.8" fill="#dedede"/>
<rect x="679.39" y="276.25" width="3.45" height="3.8" fill="#dedede"/>
<rect x="684.43" y="276.25" width="3.45" height="3.8" fill="#dedede"/>
<rect x="689.48" y="276.25" width="3.45" height="3.8" fill="#dedede"/>
<rect x="694.51" y="276.25" width="3.45" height="3.8" fill="#dedede"/>
<rect x="702.60" y="275.30" width="40.40" height="5.7" fill="#000"/>
<rect x="705.48" y="276.25" width="3.45" height="3.8" fill="#dedede"/>
<rect x="710.51" y="276.25" width="3.45" height="3.8" fill="#dedede"/>
<rect x="715.56" y="276.25" width="3.45" height="3.8" fill="#dedede"/>
<rect x="720.60" y="276.25" width="3.45" height="3.8" fill="#dedede"/>
<rect x="725.63" y="276.25" width="3.45" height="3.8" fill="#dedede"/>
<rect x="730.68" y="276.25" width="3.45" height="3.8" fill="#dedede"/>
<rect x="735.72" y="276.25" width="3.45" height="3.8" fill="#dedede"/>
<rect x="743.80" y="275.30" width="40.40" height="5.7" fill="#000"/>
<rect x="746.67" y="276.25" width="3.45" height="3.8" fill="#dedede"/>
<rect x="751.71" y="276.25" width="3.45" height="3.8" fill="#dedede"/>
<rect x="756.75" y="276.25" width="3.45" height="3.8" fill="#dedede"/>
<rect x="761.79" y="276.25" width="3.45" height="3.8" fill="#dedede"/>
<rect x="766.83" y="276.25" width="3.45" height="3.8" fill="#dedede"/>
<rect x="771.88" y="276.25" width="3.45" height="3.8" fill="#dedede"/>
<rect x="776.91" y="276.25" width="3.45" height="3.8" fill="#dedede"/>
<rect x="785.00" y="275.30" width="40.40" height="5.7" fill="#000"/>
<rect x="787.88" y="276.25" width="3.45" height="3.8" fill="#dedede"/>
<rect x="792.91" y="276.25" width="3.45" height="3.8" fill="#dedede"/>
<rect x="797.96" y="276.25" width="3.45" height="3.8" fill="#dedede"/>
<rect x="803.00" y="276.25" width="3.45" height="3.8" fill="#dedede"/>
<rect x="808.03" y="276.25" width="3.45" height="3.8" fill="#dedede"/>
<rect x="813.08" y="276.25" width="3.45" height="3.8" fill="#dedede"/>
<rect x="818.12" y="276.25" width="3.45" height="3.8" fill="#dedede"/>
<rect x="661.40" y="249.30" width="40.40" height="5.7" fill="#000"/>
<rect x="664.27" y="250.25" width="3.45" height="3.8" fill="#dedede"/>
<rect x="669.31" y="250.25" width="3.45" height="3.8" fill="#dedede"/>
<rect x="674.36" y="250.25" width="3.45" height="3.8" fill="#dedede"/>
<rect x="679.39" y="250.25" width="3.45" height="3.8" fill="#dedede"/>
<rect x="684.43" y="250.25" width="3.45" height="3.8" fill="#dedede"/>
<rect x="689.48" y="250.25" width="3.45" height="3.8" fill="#dedede"/>
<rect x="694.51" y="250.25" width="3.45" height="3.8" fill="#dedede"/>
<rect x="702.60" y="249.30" width="40.40" height="5.7" fill="#000"/>
<rect x="705.48" y="250.25" width="3.45" height="3.8" fill="#dedede"/>
<rect x="710.51" y="250.25" width="3.45" height="3.8" fill="#dedede"/>
<rect x="715.56" y="250.25" width="3.45" height="3.8" fill="#dedede"/>
<rect x="720.60" y="250.25" width="3.45" height="3.8" fill="#dedede"/>
<rect x="725.63" y="250.25" width="3.45" height="3.8" fill="#dedede"/>
<rect x="730.68" y="250.25" width="3.45" height="3.8" fill="#dedede"/>
<rect x="735.72" y="250.25" width="3.45" height="3.8" fill="#dedede"/>
<rect x="743.80" y="249.30" width="40.40" height="5.7" fill="#000"/>
<rect x="746.67" y="250.25" width="3.45" height="3.8" fill="#dedede"/>
<rect x="751.71" y="250.25" width="3.45" height="3.8" fill="#dedede"/>
<rect x="756.75" y="250.25" width="3.45" height="3.8" fill="#dedede"/>
<rect x="761.79" y="250.25" width="3.45" height="3.8" fill="#dedede"/>
<rect x="766.83" y="250.25" width="3.45" height="3.8" fill="#dedede"/>
<rect x="771.88" y="250.25" width="3.45" height="3.8" fill="#dedede"/>
<rect x="776.91" y="250.25" width="3.45" height="3.8" fill="#dedede"/>
<rect x="785.00" y="249.30" width="40.40" height="5.7" fill="#000"/>
<rect x="787.88" y="250.25" width="3.45" height="3.8" fill="#dedede"/>
<rect x="792.91" y="250.25" width="3.45" height="3.8" fill="#dedede"/>
<rect x="797.96" y="250.25" width="3.45" height="3.8" fill="#dedede"/>
<rect x="803.00" y="250.25" width="3.45" height="3.8" fill="#dedede"/>
<rect x="808.03" y="250.25" width="3.45" height="3.8" fill="#dedede"/>
<rect x="813.08" y="250.25" width="3.45" height="3.8" fill="#dedede"/>
<rect x="818.12" y="250.25" width="3.45" height="3.8" fill="#dedede"/>
<rect x="826.20" y="249.30" width="40.40" height="5.7" fill="#000"/>
<rect x="829.07" y="250.25" width="3.45" height="3.8" fill="#dedede"/>
<rect x="834.12" y="250.25" width="3.45" height="3.8" fill="#dedede"/>
<rect x="839.17" y="250.25" width="3.45" height="3.8" fill="#dedede"/>
<rect x="844.22" y="250.25" width="3.45" height="3.8" fill="#dedede"/>
<rect x="849.27" y="250.25" width="3.45" height="3.8" fill="#dedede"/>
<rect x="854.32" y="250.25" width="3.45" height="3.8" fill="#dedede"/>
<circle cx="859.80" cy="252.00" r="2.4" fill="#707070" stroke="#dedede" stroke-width="0.9"/>
<rect x="867.50" y="247.30" width="3.5" height="9.6" fill="#000"/>
<rect x="661.40" y="275.30" width="40.40" height="5.7" fill="#000"/>
<rect x="664.27" y="276.25" width="3.45" height="3.8" fill="#dedede"/>
<rect x="669.31" y="276.25" width="3.45" height="3.8" fill="#dedede"/>
<rect x="674.36" y="276.25" width="3.45" height="3.8" fill="#dedede"/>
<rect x="679.39" y="276.25" width="3.45" height="3.8" fill="#dedede"/>
<rect x="684.43" y="276.25" width="3.45" height="3.8" fill="#dedede"/>
<rect x="689.48" y="276.25" width="3.45" height="3.8" fill="#dedede"/>
<rect x="694.51" y="276.25" width="3.45" height="3.8" fill="#dedede"/>
<rect x="702.60" y="275.30" width="40.40" height="5.7" fill="#000"/>
<rect x="705.48" y="276.25" width="3.45" height="3.8" fill="#dedede"/>
<rect x="710.51" y="276.25" width="3.45" height="3.8" fill="#dedede"/>
<rect x="715.56" y="276.25" width="3.45" height="3.8" fill="#dedede"/>
<rect x="720.60" y="276.25" width="3.45" height="3.8" fill="#dedede"/>
<rect x="725.63" y="276.25" width="3.45" height="3.8" fill="#dedede"/>
<rect x="730.68" y="276.25" width="3.45" height="3.8" fill="#dedede"/>
<rect x="735.72" y="276.25" width="3.45" height="3.8" fill="#dedede"/>
<rect x="743.80" y="275.30" width="40.40" height="5.7" fill="#000"/>
<rect x="746.67" y="276.25" width="3.45" height="3.8" fill="#dedede"/>
<rect x="751.71" y="276.25" width="3.45" height="3.8" fill="#dedede"/>
<rect x="756.75" y="276.25" width="3.45" height="3.8" fill="#dedede"/>
<rect x="761.79" y="276.25" width="3.45" height="3.8" fill="#dedede"/>
<rect x="766.83" y="276.25" width="3.45" height="3.8" fill="#dedede"/>
<rect x="771.88" y="276.25" width="3.45" height="3.8" fill="#dedede"/>
<rect x="776.91" y="276.25" width="3.45" height="3.8" fill="#dedede"/>
<rect x="785.00" y="275.30" width="40.40" height="5.7" fill="#000"/>
<rect x="787.88" y="276.25" width="3.45" height="3.8" fill="#dedede"/>
<rect x="792.91" y="276.25" width="3.45" height="3.8" fill="#dedede"/>
<rect x="797.96" y="276.25" width="3.45" height="3.8" fill="#dedede"/>
<rect x="803.00" y="276.25" width="3.45" height="3.8" fill="#dedede"/>
<rect x="808.03" y="276.25" width="3.45" height="3.8" fill="#dedede"/>
<rect x="813.08" y="276.25" width="3.45" height="3.8" fill="#dedede"/>
<rect x="818.12" y="276.25" width="3.45" height="3.8" fill="#dedede"/>
<rect x="826.20" y="275.30" width="40.40" height="5.7" fill="#000"/>
<rect x="829.07" y="276.25" width="3.45" height="3.8" fill="#dedede"/>
<rect x="834.12" y="276.25" width="3.45" height="3.8" fill="#dedede"/>
<rect x="839.17" y="276.25" width="3.45" height="3.8" fill="#dedede"/>
<rect x="844.22" y="276.25" width="3.45" height="3.8" fill="#dedede"/>
<rect x="849.27" y="276.25" width="3.45" height="3.8" fill="#dedede"/>
<rect x="854.32" y="276.25" width="3.45" height="3.8" fill="#dedede"/>
<circle cx="859.80" cy="278.00" r="2.4" fill="#707070" stroke="#dedede" stroke-width="0.9"/>
<rect x="867.50" y="273.30" width="3.5" height="9.6" fill="#000"/>
<rect x="661.40" y="301.30" width="40.40" height="5.7" fill="#000"/>
<rect x="664.27" y="302.25" width="3.45" height="3.8" fill="#dedede"/>
<rect x="669.31" y="302.25" width="3.45" height="3.8" fill="#dedede"/>
<rect x="674.36" y="302.25" width="3.45" height="3.8" fill="#dedede"/>
<rect x="679.39" y="302.25" width="3.45" height="3.8" fill="#dedede"/>
<rect x="684.43" y="302.25" width="3.45" height="3.8" fill="#dedede"/>
<rect x="689.48" y="302.25" width="3.45" height="3.8" fill="#dedede"/>
<rect x="694.51" y="302.25" width="3.45" height="3.8" fill="#dedede"/>
<rect x="702.60" y="301.30" width="40.40" height="5.7" fill="#000"/>
<rect x="705.48" y="302.25" width="3.45" height="3.8" fill="#dedede"/>
<rect x="710.51" y="302.25" width="3.45" height="3.8" fill="#dedede"/>
<rect x="715.56" y="302.25" width="3.45" height="3.8" fill="#dedede"/>
<rect x="720.60" y="302.25" width="3.45" height="3.8" fill="#dedede"/>
<rect x="725.63" y="302.25" width="3.45" height="3.8" fill="#dedede"/>
<rect x="730.68" y="302.25" width="3.45" height="3.8" fill="#dedede"/>
<rect x="735.72" y="302.25" width="3.45" height="3.8" fill="#dedede"/>
<rect x="743.80" y="301.30" width="40.40" height="5.7" fill="#000"/>
<rect x="746.67" y="302.25" width="3.45" height="3.8" fill="#dedede"/>
<rect x="751.71" y="302.25" width="3.45" height="3.8" fill="#dedede"/>
<rect x="756.75" y="302.25" width="3.45" height="3.8" fill="#dedede"/>
<rect x="761.79" y="302.25" width="3.45" height="3.8" fill="#dedede"/>
<rect x="766.83" y="302.25" width="3.45" height="3.8" fill="#dedede"/>
<rect x="771.88" y="302.25" width="3.45" height="3.8" fill="#dedede"/>
<rect x="776.91" y="302.25" width="3.45" height="3.8" fill="#dedede"/>
<rect x="785.00" y="301.30" width="40.40" height="5.7" fill="#000"/>
<rect x="787.88" y="302.25" width="3.45" height="3.8" fill="#dedede"/>
<rect x="792.91" y="302.25" width="3.45" height="3.8" fill="#dedede"/>
<rect x="797.96" y="302.25" width="3.45" height="3.8" fill="#dedede"/>
<rect x="803.00" y="302.25" width="3.45" height="3.8" fill="#dedede"/>
<rect x="808.03" y="302.25" width="3.45" height="3.8" fill="#dedede"/>
<rect x="813.08" y="302.25" width="3.45" height="3.8" fill="#dedede"/>
<rect x="818.12" y="302.25" width="3.45" height="3.8" fill="#dedede"/>
<rect x="826.20" y="301.30" width="40.40" height="5.7" fill="#000"/>
<rect x="829.07" y="302.25" width="3.45" height="3.8" fill="#dedede"/>
<rect x="834.12" y="302.25" width="3.45" height="3.8" fill="#dedede"/>
<rect x="839.17" y="302.25" width="3.45" height="3.8" fill="#dedede"/>
<rect x="844.22" y="302.25" width="3.45" height="3.8" fill="#dedede"/>
<rect x="849.27" y="302.25" width="3.45" height="3.8" fill="#dedede"/>
<rect x="854.32" y="302.25" width="3.45" height="3.8" fill="#dedede"/>
<circle cx="859.80" cy="304.00" r="2.4" fill="#707070" stroke="#dedede" stroke-width="0.9"/>
<rect x="867.50" y="299.30" width="3.5" height="9.6" fill="#000"/>
<rect x="661.40" y="327.30" width="40.40" height="5.7" fill="#000"/>
<rect x="664.27" y="328.25" width="3.45" height="3.8" fill="#dedede"/>
<rect x="669.31" y="328.25" width="3.45" height="3.8" fill="#dedede"/>
<rect x="674.36" y="328.25" width="3.45" height="3.8" fill="#dedede"/>
<rect x="679.39" y="328.25" width="3.45" height="3.8" fill="#dedede"/>
<rect x="684.43" y="328.25" width="3.45" height="3.8" fill="#dedede"/>
<rect x="689.48" y="328.25" width="3.45" height="3.8" fill="#dedede"/>
<rect x="694.51" y="328.25" width="3.45" height="3.8" fill="#dedede"/>
<rect x="702.60" y="327.30" width="40.40" height="5.7" fill="#000"/>
<rect x="705.48" y="328.25" width="3.45" height="3.8" fill="#dedede"/>
<rect x="710.51" y="328.25" width="3.45" height="3.8" fill="#dedede"/>
<rect x="715.56" y="328.25" width="3.45" height="3.8" fill="#dedede"/>
<rect x="720.60" y="328.25" width="3.45" height="3.8" fill="#dedede"/>
<rect x="725.63" y="328.25" width="3.45" height="3.8" fill="#dedede"/>
<rect x="730.68" y="328.25" width="3.45" height="3.8" fill="#dedede"/>
<rect x="735.72" y="328.25" width="3.45" height="3.8" fill="#dedede"/>
<rect x="743.80" y="327.30" width="40.40" height="5.7" fill="#000"/>
<rect x="746.67" y="328.25" width="3.45" height="3.8" fill="#dedede"/>
<rect x="751.71" y="328.25" width="3.45" height="3.8" fill="#dedede"/>
<rect x="756.75" y="328.25" width="3.45" height="3.8" fill="#dedede"/>
<rect x="761.79" y="328.25" width="3.45" height="3.8" fill="#dedede"/>
<rect x="766.83" y="328.25" width="3.45" height="3.8" fill="#dedede"/>
<rect x="771.88" y="328.25" width="3.45" height="3.8" fill="#dedede"/>
<rect x="776.91" y="328.25" width="3.45" height="3.8" fill="#dedede"/>
<rect x="785.00" y="327.30" width="40.40" height="5.7" fill="#000"/>
<rect x="787.88" y="328.25" width="3.45" height="3.8" fill="#dedede"/>
<rect x="792.91" y="328.25" width="3.45" height="3.8" fill="#dedede"/>
<rect x="797.96" y="328.25" width="3.45" height="3.8" fill="#dedede"/>
<rect x="803.00" y="328.25" width="3.45" height="3.8" fill="#dedede"/>
<rect x="808.03" y="328.25" width="3.45" height="3.8" fill="#dedede"/>
<rect x="813.08" y="328.25" width="3.45" height="3.8" fill="#dedede"/>
<rect x="818.12" y="328.25" width="3.45" height="3.8" fill="#dedede"/>
<rect x="826.20" y="327.30" width="40.40" height="5.7" fill="#000"/>
<rect x="829.07" y="328.25" width="3.45" height="3.8" fill="#dedede"/>
<rect x="834.12" y="328.25" width="3.45" height="3.8" fill="#dedede"/>
<rect x="839.17" y="328.25" width="3.45" height="3.8" fill="#dedede"/>
<rect x="844.22" y="328.25" width="3.45" height="3.8" fill="#dedede"/>
<rect x="849.27" y="328.25" width="3.45" height="3.8" fill="#dedede"/>
<rect x="854.32" y="328.25" width="3.45" height="3.8" fill="#dedede"/>
<circle cx="859.80" cy="330.00" r="2.4" fill="#707070" stroke="#dedede" stroke-width="0.9"/>
<rect x="867.50" y="325.30" width="3.5" height="9.6" fill="#000"/>
<rect x="661.40" y="353.30" width="40.40" height="5.7" fill="#000"/>
<rect x="664.27" y="354.25" width="3.45" height="3.8" fill="#dedede"/>
<rect x="669.31" y="354.25" width="3.45" height="3.8" fill="#dedede"/>
<rect x="674.36" y="354.25" width="3.45" height="3.8" fill="#dedede"/>
<rect x="679.39" y="354.25" width="3.45" height="3.8" fill="#dedede"/>
<rect x="684.43" y="354.25" width="3.45" height="3.8" fill="#dedede"/>
<rect x="689.48" y="354.25" width="3.45" height="3.8" fill="#dedede"/>
<rect x="694.51" y="354.25" width="3.45" height="3.8" fill="#dedede"/>
<rect x="702.60" y="353.30" width="40.40" height="5.7" fill="#000"/>
<rect x="705.48" y="354.25" width="3.45" height="3.8" fill="#dedede"/>
<rect x="710.51" y="354.25" width="3.45" height="3.8" fill="#dedede"/>
<rect x="715.56" y="354.25" width="3.45" height="3.8" fill="#dedede"/>
<rect x="720.60" y="354.25" width="3.45" height="3.8" fill="#dedede"/>
<rect x="725.63" y="354.25" width="3.45" height="3.8" fill="#dedede"/>
<rect x="730.68" y="354.25" width="3.45" height="3.8" fill="#dedede"/>
<rect x="735.72" y="354.25" width="3.45" height="3.8" fill="#dedede"/>
<rect x="743.80" y="353.30" width="40.40" height="5.7" fill="#000"/>
<rect x="746.67" y="354.25" width="3.45" height="3.8" fill="#dedede"/>
<rect x="751.71" y="354.25" width="3.45" height="3.8" fill="#dedede"/>
<rect x="756.75" y="354.25" width="3.45" height="3.8" fill="#dedede"/>
<rect x="761.79" y="354.25" width="3.45" height="3.8" fill="#dedede"/>
<rect x="766.83" y="354.25" width="3.45" height="3.8" fill="#dedede"/>
<rect x="771.88" y="354.25" width="3.45" height="3.8" fill="#dedede"/>
<rect x="776.91" y="354.25" width="3.45" height="3.8" fill="#dedede"/>
<rect x="785.00" y="353.30" width="40.40" height="5.7" fill="#000"/>
<rect x="787.88" y="354.25" width="3.45" height="3.8" fill="#dedede"/>
<rect x="792.91" y="354.25" width="3.45" height="3.8" fill="#dedede"/>
<rect x="797.96" y="354.25" width="3.45" height="3.8" fill="#dedede"/>
<rect x="803.00" y="354.25" width="3.45" height="3.8" fill="#dedede"/>
<rect x="808.03" y="354.25" width="3.45" height="3.8" fill="#dedede"/>
<rect x="813.08" y="354.25" width="3.45" height="3.8" fill="#dedede"/>
<rect x="818.12" y="354.25" width="3.45" height="3.8" fill="#dedede"/>
<rect x="826.20" y="353.30" width="40.40" height="5.7" fill="#000"/>
<rect x="829.07" y="354.25" width="3.45" height="3.8" fill="#dedede"/>
<rect x="834.12" y="354.25" width="3.45" height="3.8" fill="#dedede"/>
<rect x="839.17" y="354.25" width="3.45" height="3.8" fill="#dedede"/>
<rect x="844.22" y="354.25" width="3.45" height="3.8" fill="#dedede"/>
<rect x="849.27" y="354.25" width="3.45" height="3.8" fill="#dedede"/>
<rect x="854.32" y="354.25" width="3.45" height="3.8" fill="#dedede"/>
<circle cx="859.80" cy="356.00" r="2.4" fill="#707070" stroke="#dedede" stroke-width="0.9"/>
<rect x="867.50" y="351.30" width="3.5" height="9.6" fill="#000"/>
<polygon points="518.29,280.52 537.05,268.68 537.05,265.35 531.84,265.35 515.31,275.78" fill="#000"/>
<rect x="519.58" y="273.39" width="3.5" height="3.8" fill="#dedede" transform="rotate(-32.3 521.33 275.29)"/>
<rect x="523.91" y="270.66" width="3.5" height="3.8" fill="#dedede" transform="rotate(-32.3 525.66 272.56)"/>
<rect x="528.23" y="267.93" width="3.5" height="3.8" fill="#dedede" transform="rotate(-32.3 529.98 269.83)"/>
<circle cx="516.80" cy="278.15" r="2.3" fill="#000" stroke="#ececec" stroke-width="0.9"/>
<circle cx="516.80" cy="285.00" r="1.7" fill="#808080" stroke="#202020" stroke-width="0.8"/>
<polygon points="556.51,280.52 572.56,290.65 578.25,290.65 578.25,287.62 559.49,275.78" fill="#000"/>
<rect x="560.78" y="279.11" width="3.5" height="3.8" fill="#dedede" transform="rotate(32.3 562.53 281.01)"/>
<rect x="565.11" y="281.84" width="3.5" height="3.8" fill="#dedede" transform="rotate(32.3 566.86 283.74)"/>
<rect x="569.43" y="284.57" width="3.5" height="3.8" fill="#dedede" transform="rotate(32.3 571.18 286.47)"/>
<circle cx="558.00" cy="278.15" r="2.3" fill="#000" stroke="#ececec" stroke-width="0.9"/>
<circle cx="558.00" cy="271.00" r="1.7" fill="#808080" stroke="#202020" stroke-width="0.8"/>
<rect x="507.00" y="292.80" width="19.50" height="6.60" fill="#fff"/>
<text x="516.75" y="298.40" font-size="6.3" font-family="DejaVu Sans Condensed, DejaVu Sans, Liberation Sans, sans-serif" text-anchor="middle" fill="#2c2c3c">5003</text>
<polygon points="600.69,301.78 584.16,291.35 578.95,291.35 578.95,294.68 597.71,306.52" fill="#000"/>
<line x1="593.43" y1="300.51" x2="583.13" y2="294.01" stroke="#ffe000" stroke-width="2" stroke-linecap="butt"/>
<circle cx="608.50" cy="297.50" r="1.7" fill="#808080" stroke="#202020" stroke-width="0.8"/>
<circle cx="393.3" cy="284" r="1.5" fill="#909090" stroke="#202020" stroke-width="0.8"/>
<rect x="39.00" y="299.30" width="3.5" height="9.6" fill="#000"/>
<rect x="43.40" y="301.30" width="40.40" height="5.7" fill="#000"/>
<rect x="46.27" y="302.25" width="3.45" height="3.8" fill="#dedede"/>
<rect x="51.32" y="302.25" width="3.45" height="3.8" fill="#dedede"/>
<rect x="56.38" y="302.25" width="3.45" height="3.8" fill="#dedede"/>
<rect x="61.42" y="302.25" width="3.45" height="3.8" fill="#dedede"/>
<rect x="66.48" y="302.25" width="3.45" height="3.8" fill="#dedede"/>
<rect x="71.53" y="302.25" width="3.45" height="3.8" fill="#dedede"/>
<circle cx="77.00" cy="304.00" r="2.4" fill="#707070" stroke="#dedede" stroke-width="0.9"/>
<rect x="84.60" y="301.30" width="40.40" height="5.7" fill="#000"/>
<rect x="87.48" y="302.25" width="3.45" height="3.8" fill="#dedede"/>
<rect x="92.52" y="302.25" width="3.45" height="3.8" fill="#dedede"/>
<rect x="97.56" y="302.25" width="3.45" height="3.8" fill="#dedede"/>
<rect x="102.60" y="302.25" width="3.45" height="3.8" fill="#dedede"/>
<rect x="107.64" y="302.25" width="3.45" height="3.8" fill="#dedede"/>
<rect x="112.68" y="302.25" width="3.45" height="3.8" fill="#dedede"/>
<rect x="117.72" y="302.25" width="3.45" height="3.8" fill="#dedede"/>
<rect x="125.80" y="301.30" width="40.40" height="5.7" fill="#000"/>
<rect x="128.68" y="302.25" width="3.45" height="3.8" fill="#dedede"/>
<rect x="133.72" y="302.25" width="3.45" height="3.8" fill="#dedede"/>
<rect x="138.76" y="302.25" width="3.45" height="3.8" fill="#dedede"/>
<rect x="143.80" y="302.25" width="3.45" height="3.8" fill="#dedede"/>
<rect x="148.84" y="302.25" width="3.45" height="3.8" fill="#dedede"/>
<rect x="153.88" y="302.25" width="3.45" height="3.8" fill="#dedede"/>
<rect x="158.92" y="302.25" width="3.45" height="3.8" fill="#dedede"/>
<rect x="167.00" y="301.30" width="40.40" height="5.7" fill="#000"/>
<rect x="169.88" y="302.25" width="3.45" height="3.8" fill="#dedede"/>
<rect x="174.92" y="302.25" width="3.45" height="3.8" fill="#dedede"/>
<rect x="179.96" y="302.25" width="3.45" height="3.8" fill="#dedede"/>
<rect x="185.00" y="302.25" width="3.45" height="3.8" fill="#dedede"/>
<rect x="190.04" y="302.25" width="3.45" height="3.8" fill="#dedede"/>
<rect x="195.08" y="302.25" width="3.45" height="3.8" fill="#dedede"/>
<rect x="200.12" y="302.25" width="3.45" height="3.8" fill="#dedede"/>
<rect x="208.20" y="301.30" width="40.40" height="5.7" fill="#000"/>
<rect x="211.08" y="302.25" width="3.45" height="3.8" fill="#dedede"/>
<rect x="216.12" y="302.25" width="3.45" height="3.8" fill="#dedede"/>
<rect x="221.16" y="302.25" width="3.45" height="3.8" fill="#dedede"/>
<rect x="226.20" y="302.25" width="3.45" height="3.8" fill="#dedede"/>
<rect x="231.24" y="302.25" width="3.45" height="3.8" fill="#dedede"/>
<rect x="236.28" y="302.25" width="3.45" height="3.8" fill="#dedede"/>
<rect x="241.32" y="302.25" width="3.45" height="3.8" fill="#dedede"/>
<rect x="249.40" y="301.50" width="19.80" height="5.3" fill="#000"/>
<rect x="255.10" y="303.15" width="8.70" height="2" fill="#808080"/>
<rect x="270.00" y="301.50" width="19.80" height="5.3" fill="#000"/>
<rect x="275.20" y="303.15" width="9.00" height="2" fill="#ffe000"/>
<polygon points="268.11,301.78 249.35,313.62 249.35,316.65 255.04,316.65 271.09,306.52" fill="#000"/>
<line x1="263.42" y1="308.05" x2="255.18" y2="313.25" stroke="#ffe000" stroke-width="2" stroke-linecap="butt"/>
<polygon points="271.09,306.52 289.85,294.68 289.85,291.35 284.64,291.35 268.11,301.78" fill="#000"/>
<line x1="275.78" y1="300.25" x2="284.02" y2="295.05" stroke="#808080" stroke-width="2" stroke-linecap="butt"/>
<path d="M264.10,299.80 L272.10,298.80 M267.10,309.20 L275.10,308.20" stroke="#303030" stroke-width="0.6" fill="none"/>
<circle cx="269.60" cy="304.15" r="2.55" fill="#000" stroke="#ececec" stroke-width="1.0"/>
<circle cx="261.20" cy="297.60" r="1.7" fill="#808080" stroke="#202020" stroke-width="0.8"/>
<circle cx="274.30" cy="310.80" r="1.7" fill="#808080" stroke="#202020" stroke-width="0.8"/>
<rect x="280.60" y="307.60" width="7.60" height="7.00" fill="#fff"/>
<text x="284.40" y="313.60" font-size="6.9" font-family="DejaVu Sans Condensed, DejaVu Sans, Liberation Sans, sans-serif" text-anchor="middle" fill="#2c2c3c">5</text>
<rect x="290.60" y="301.50" width="40.40" height="5.3" fill="#000"/>
<rect x="302.70" y="303.15" width="16.20" height="2" fill="#808080"/>
<rect x="331.80" y="301.50" width="40.40" height="5.3" fill="#000"/>
<rect x="343.90" y="303.15" width="16.20" height="2" fill="#808080"/>
<rect x="373.00" y="301.50" width="40.40" height="5.3" fill="#000"/>
<rect x="385.10" y="303.15" width="16.20" height="2" fill="#808080"/>
<rect x="414.20" y="301.50" width="40.40" height="5.3" fill="#000"/>
<rect x="426.30" y="303.15" width="16.20" height="2" fill="#808080"/>
<rect x="455.40" y="301.50" width="40.40" height="5.3" fill="#000"/>
<rect x="467.50" y="303.15" width="16.20" height="2" fill="#808080"/>
<rect x="496.60" y="301.50" width="40.40" height="5.3" fill="#000"/>
<rect x="508.70" y="303.15" width="16.20" height="2" fill="#808080"/>
<rect x="537.80" y="301.50" width="40.40" height="5.3" fill="#000"/>
<rect x="549.90" y="303.15" width="16.20" height="2" fill="#808080"/>
<rect x="579.00" y="301.50" width="40.40" height="5.3" fill="#000"/>
<rect x="591.10" y="303.15" width="16.20" height="2" fill="#808080"/>
<rect x="620.20" y="301.50" width="40.40" height="5.3" fill="#000"/>
<rect x="632.30" y="303.15" width="16.20" height="2" fill="#808080"/>
<polygon points="290.55,290.65 296.00,290.65 331.05,268.53 331.05,265.35 325.60,265.35 290.55,287.47" fill="#000"/>
<rect x="295.35" y="284.75" width="3.5" height="3.8" fill="#dedede" transform="rotate(-32.3 297.10 286.64)"/>
<rect x="299.27" y="282.28" width="3.5" height="3.8" fill="#dedede" transform="rotate(-32.3 301.02 284.18)"/>
<rect x="303.18" y="279.81" width="3.5" height="3.8" fill="#dedede" transform="rotate(-32.3 304.93 281.70)"/>
<rect x="307.09" y="277.34" width="3.5" height="3.8" fill="#dedede" transform="rotate(-32.3 308.84 279.24)"/>
<rect x="311.01" y="274.87" width="3.5" height="3.8" fill="#dedede" transform="rotate(-32.3 312.76 276.76)"/>
<rect x="314.92" y="272.40" width="3.5" height="3.8" fill="#dedede" transform="rotate(-32.3 316.67 274.30)"/>
<rect x="318.84" y="269.93" width="3.5" height="3.8" fill="#dedede" transform="rotate(-32.3 320.59 271.82)"/>
<rect x="322.75" y="267.46" width="3.5" height="3.8" fill="#dedede" transform="rotate(-32.3 324.50 269.36)"/>
<polygon points="248.65,317.35 243.20,317.35 208.15,339.47 208.15,342.65 213.60,342.65 248.65,320.53" fill="#000"/>
<line x1="235.40" y1="325.58" x2="220.98" y2="334.68" stroke="#808080" stroke-width="2" stroke-linecap="butt"/>
<polygon points="207.45,343.35 202.00,343.35 166.95,365.47 166.95,368.65 172.40,368.65 207.45,346.53" fill="#000"/>
<line x1="194.20" y1="351.58" x2="179.78" y2="360.68" stroke="#808080" stroke-width="2" stroke-linecap="butt"/>
<rect x="39.00" y="377.30" width="3.5" height="9.6" fill="#000"/>
<rect x="43.40" y="379.30" width="40.40" height="5.7" fill="#000"/>
<rect x="46.27" y="380.25" width="3.45" height="3.8" fill="#dedede"/>
<rect x="51.32" y="380.25" width="3.45" height="3.8" fill="#dedede"/>
<rect x="56.38" y="380.25" width="3.45" height="3.8" fill="#dedede"/>
<rect x="61.42" y="380.25" width="3.45" height="3.8" fill="#dedede"/>
<rect x="66.48" y="380.25" width="3.45" height="3.8" fill="#dedede"/>
<rect x="71.53" y="380.25" width="3.45" height="3.8" fill="#dedede"/>
<circle cx="77.00" cy="382.00" r="2.4" fill="#707070" stroke="#dedede" stroke-width="0.9"/>
<rect x="84.60" y="379.50" width="40.40" height="5.3" fill="#000"/>
<rect x="96.70" y="381.15" width="16.20" height="2" fill="#808080"/>
<rect x="125.80" y="379.50" width="19.80" height="5.3" fill="#000"/>
<rect x="131.50" y="381.15" width="8.70" height="2" fill="#808080"/>
<rect x="146.40" y="379.50" width="19.80" height="5.3" fill="#000"/>
<rect x="151.60" y="381.15" width="9.00" height="2" fill="#ffe000"/>
<polygon points="144.51,379.78 125.75,391.62 125.75,394.65 131.44,394.65 147.49,384.52" fill="#000"/>
<line x1="139.82" y1="386.05" x2="131.58" y2="391.25" stroke="#ffe000" stroke-width="2" stroke-linecap="butt"/>
<polygon points="147.49,384.52 166.25,372.68 166.25,369.35 161.04,369.35 144.51,379.78" fill="#000"/>
<line x1="152.18" y1="378.25" x2="160.42" y2="373.05" stroke="#808080" stroke-width="2" stroke-linecap="butt"/>
<path d="M140.50,377.80 L148.50,376.80 M143.50,387.20 L151.50,386.20" stroke="#303030" stroke-width="0.6" fill="none"/>
<circle cx="146.00" cy="382.15" r="2.55" fill="#000" stroke="#ececec" stroke-width="1.0"/>
<circle cx="137.60" cy="375.60" r="1.7" fill="#ffe000" stroke="#202020" stroke-width="0.8"/>
<circle cx="150.60" cy="388.80" r="1.7" fill="#ffe000" stroke="#202020" stroke-width="0.8"/>
<rect x="157.00" y="386.60" width="8.00" height="6.80" fill="#fff"/>
<text x="161.00" y="392.40" font-size="6.9" font-family="DejaVu Sans Condensed, DejaVu Sans, Liberation Sans, sans-serif" text-anchor="middle" fill="#2c2c3c">3</text>
<rect x="167.00" y="379.50" width="40.40" height="5.3" fill="#000"/>
<rect x="179.10" y="381.15" width="16.20" height="2" fill="#ffe000"/>
<rect x="208.20" y="379.50" width="40.40" height="5.3" fill="#000"/>
<rect x="220.30" y="381.15" width="16.20" height="2" fill="#ffe000"/>
<rect x="249.40" y="379.50" width="40.40" height="5.3" fill="#000"/>
<rect x="261.50" y="381.15" width="16.20" height="2" fill="#ffe000"/>
<rect x="290.60" y="379.50" width="40.40" height="5.3" fill="#000"/>
<rect x="302.70" y="381.15" width="16.20" height="2" fill="#ffe000"/>
<rect x="331.80" y="379.50" width="40.40" height="5.3" fill="#000"/>
<rect x="343.90" y="381.15" width="16.20" height="2" fill="#ffe000"/>
<rect x="373.00" y="379.50" width="40.40" height="5.3" fill="#000"/>
<rect x="385.10" y="381.15" width="16.20" height="2" fill="#ffe000"/>
<rect x="414.20" y="379.50" width="40.40" height="5.3" fill="#000"/>
<rect x="426.30" y="381.15" width="16.20" height="2" fill="#ffe000"/>
<rect x="455.40" y="379.50" width="40.40" height="5.3" fill="#000"/>
<rect x="467.50" y="381.15" width="16.20" height="2" fill="#ffe000"/>
<rect x="496.60" y="379.50" width="40.40" height="5.3" fill="#000"/>
<rect x="508.70" y="381.15" width="16.20" height="2" fill="#ffe000"/>
<rect x="537.80" y="379.50" width="40.40" height="5.3" fill="#000"/>
<rect x="549.90" y="381.15" width="16.20" height="2" fill="#ffe000"/>
<rect x="579.00" y="379.50" width="40.40" height="5.3" fill="#000"/>
<rect x="591.10" y="381.15" width="16.20" height="2" fill="#ffe000"/>
<rect x="620.20" y="379.50" width="40.40" height="5.3" fill="#000"/>
<rect x="632.30" y="381.15" width="16.20" height="2" fill="#ffe000"/>
<rect x="661.40" y="379.50" width="40.40" height="5.3" fill="#000"/>
<rect x="673.50" y="381.15" width="16.20" height="2" fill="#ffe000"/>
<polygon points="125.05,395.35 119.60,395.35 84.55,417.47 84.55,420.65 90.00,420.65 125.05,398.53" fill="#000"/>
<line x1="111.80" y1="403.58" x2="97.38" y2="412.68" stroke="#ffe000" stroke-width="2" stroke-linecap="butt"/>
<rect x="2.20" y="431.50" width="40.40" height="5.3" fill="#000"/>
<rect x="16.00" y="433.15" width="13.10" height="2" fill="#ffe000"/>
<rect x="43.40" y="431.50" width="19.80" height="5.3" fill="#000"/>
<rect x="46.10" y="433.15" width="12.30" height="2" fill="#ffe000"/>
<rect x="64.00" y="431.50" width="19.80" height="5.3" fill="#000"/>
<rect x="69.10" y="433.15" width="12.50" height="2" fill="#808080"/>
<polygon points="65.09,436.52 83.85,424.68 83.85,421.35 78.64,421.35 62.11,431.78" fill="#000"/>
<line x1="69.37" y1="430.51" x2="79.67" y2="424.01" stroke="#ffe000" stroke-width="2" stroke-linecap="butt"/>
<circle cx="63.60" cy="434.15" r="2.3" fill="#000" stroke="#ececec" stroke-width="0.9"/>
<circle cx="64.00" cy="440.80" r="1.7" fill="#ffe000" stroke="#202020" stroke-width="0.8"/>
<rect x="84.60" y="431.50" width="40.40" height="5.3" fill="#000"/>
<rect x="96.70" y="433.15" width="16.20" height="2" fill="#808080"/>
<rect x="125.80" y="431.50" width="40.40" height="5.3" fill="#000"/>
<rect x="137.90" y="433.15" width="16.20" height="2" fill="#808080"/>
<rect x="167.00" y="431.50" width="19.80" height="5.3" fill="#000"/>
<rect x="169.70" y="433.15" width="12.30" height="2" fill="#ffe000"/>
<rect x="187.60" y="431.50" width="19.80" height="5.3" fill="#000"/>
<rect x="192.70" y="433.15" width="12.50" height="2" fill="#808080"/>
<polygon points="185.71,431.78 166.95,443.62 166.95,446.65 172.64,446.65 188.69,436.52" fill="#000"/>
<line x1="181.43" y1="437.79" x2="171.13" y2="444.29" stroke="#808080" stroke-width="2" stroke-linecap="butt"/>
<circle cx="187.20" cy="434.15" r="2.3" fill="#000" stroke="#ececec" stroke-width="0.9"/>
<circle cx="187.20" cy="427.80" r="1.7" fill="#808080" stroke="#202020" stroke-width="0.8"/>
<rect x="198.20" y="422.80" width="7.80" height="6.80" fill="#fff"/>
<text x="202.10" y="428.60" font-size="6.9" font-family="DejaVu Sans Condensed, DejaVu Sans, Liberation Sans, sans-serif" text-anchor="middle" fill="#2c2c3c">7</text>
<rect x="208.20" y="431.50" width="40.40" height="5.3" fill="#000"/>
<rect x="220.30" y="433.15" width="16.20" height="2" fill="#808080"/>
<rect x="249.40" y="431.50" width="40.40" height="5.3" fill="#000"/>
<rect x="261.50" y="433.15" width="16.20" height="2" fill="#808080"/>
<rect x="290.60" y="431.50" width="40.40" height="5.3" fill="#000"/>
<rect x="302.70" y="433.15" width="16.20" height="2" fill="#808080"/>
<rect x="331.80" y="431.50" width="40.40" height="5.3" fill="#000"/>
<rect x="343.90" y="433.15" width="16.20" height="2" fill="#808080"/>
<rect x="373.00" y="431.50" width="40.40" height="5.3" fill="#000"/>
<rect x="385.10" y="433.15" width="16.20" height="2" fill="#808080"/>
<rect x="414.20" y="431.50" width="40.40" height="5.3" fill="#000"/>
<rect x="426.30" y="433.15" width="16.20" height="2" fill="#808080"/>
<rect x="455.40" y="431.50" width="40.40" height="5.3" fill="#000"/>
<rect x="467.50" y="433.15" width="16.20" height="2" fill="#808080"/>
<rect x="496.60" y="431.50" width="40.40" height="5.3" fill="#000"/>
<rect x="508.70" y="433.15" width="16.20" height="2" fill="#808080"/>
<rect x="537.80" y="431.50" width="40.40" height="5.3" fill="#000"/>
<rect x="549.90" y="433.15" width="16.20" height="2" fill="#808080"/>
<rect x="579.00" y="431.50" width="40.40" height="5.3" fill="#000"/>
<rect x="591.10" y="433.15" width="16.20" height="2" fill="#808080"/>
<rect x="620.20" y="431.50" width="40.40" height="5.3" fill="#000"/>
<rect x="632.30" y="433.15" width="16.20" height="2" fill="#808080"/>
<rect x="661.40" y="431.50" width="40.40" height="5.3" fill="#000"/>
<rect x="673.50" y="433.15" width="16.20" height="2" fill="#808080"/>
<rect x="702.60" y="431.50" width="40.40" height="5.3" fill="#000"/>
<rect x="714.70" y="433.15" width="16.20" height="2" fill="#808080"/>
<rect x="743.80" y="431.50" width="40.40" height="5.3" fill="#000"/>
<rect x="755.90" y="433.15" width="16.20" height="2" fill="#808080"/>
<rect x="785.00" y="431.50" width="40.40" height="5.3" fill="#000"/>
<rect x="798.20" y="433.15" width="13.20" height="2" fill="#808080"/>
<circle cx="818.60" cy="434.00" r="2.4" fill="#707070" stroke="#dedede" stroke-width="0.9"/>
<rect x="826.20" y="431.30" width="40.40" height="5.7" fill="#000"/>
<rect x="829.07" y="432.25" width="3.45" height="3.8" fill="#dedede"/>
<rect x="834.11" y="432.25" width="3.45" height="3.8" fill="#dedede"/>
<rect x="839.15" y="432.25" width="3.45" height="3.8" fill="#dedede"/>
<rect x="844.19" y="432.25" width="3.45" height="3.8" fill="#dedede"/>
<rect x="849.23" y="432.25" width="3.45" height="3.8" fill="#dedede"/>
<rect x="854.27" y="432.25" width="3.45" height="3.8" fill="#dedede"/>
<rect x="859.31" y="432.25" width="3.45" height="3.8" fill="#dedede"/>
<rect x="867.50" y="429.30" width="3.5" height="9.6" fill="#000"/>
<circle cx="35.8" cy="434.30" r="2.5" fill="#ff1010" stroke="#ececec" stroke-width="0.9"/>
<rect x="15.00" y="423.30" width="15.00" height="6.50" fill="#fff"/>
<text x="22.50" y="428.80" font-size="6.8" font-family="DejaVu Sans Condensed, DejaVu Sans, Liberation Sans, sans-serif" text-anchor="middle" fill="#2c2c3c">471</text>
<rect x="35.1" y="425.1" width="3.6" height="3.6" fill="#ffe000" stroke="#303000" stroke-width="0.8"/>
<circle cx="19.80" cy="441.80" r="1.7" fill="#ffe000" stroke="#202020" stroke-width="0.8"/>
<path d="M26.4,441.5 L28.8,439.1 H36.6 a2.35,2.35 0 0 1 0,4.7 H28.8 Z" fill="#000"/>
<rect x="23.2" y="439" width="1" height="5" fill="#000"/><rect x="23.2" y="441" width="4" height="1" fill="#000"/>
<circle cx="36.6" cy="441.5" r="2" fill="#ffe000" stroke="#000" stroke-width="0.5"/>
<rect x="45.00" y="438.70" width="7.70" height="7.00" fill="#fff"/>
<text x="48.85" y="444.70" font-size="6.9" font-family="DejaVu Sans Condensed, DejaVu Sans, Liberation Sans, sans-serif" text-anchor="middle" fill="#2c2c3c">1</text>
<rect x="39.00" y="455.30" width="3.5" height="9.6" fill="#000"/>
<rect x="43.40" y="457.30" width="40.40" height="5.7" fill="#000"/>
<rect x="46.27" y="458.25" width="3.45" height="3.8" fill="#dedede"/>
<rect x="51.31" y="458.25" width="3.45" height="3.8" fill="#dedede"/>
<rect x="56.35" y="458.25" width="3.45" height="3.8" fill="#dedede"/>
<rect x="61.40" y="458.25" width="3.45" height="3.8" fill="#dedede"/>
<rect x="66.44" y="458.25" width="3.45" height="3.8" fill="#dedede"/>
<rect x="71.48" y="458.25" width="3.45" height="3.8" fill="#dedede"/>
<rect x="76.52" y="458.25" width="3.45" height="3.8" fill="#dedede"/>
<rect x="84.60" y="457.30" width="19.80" height="5.7" fill="#000"/>
<rect x="87.23" y="458.25" width="3.45" height="3.8" fill="#dedede"/>
<rect x="92.28" y="458.25" width="3.45" height="3.8" fill="#dedede"/>
<rect x="97.33" y="458.25" width="3.45" height="3.8" fill="#dedede"/>
<rect x="105.20" y="457.30" width="19.80" height="5.7" fill="#000"/>
<rect x="108.83" y="458.25" width="3.45" height="3.8" fill="#dedede"/>
<rect x="113.88" y="458.25" width="3.45" height="3.8" fill="#dedede"/>
<rect x="118.93" y="458.25" width="3.45" height="3.8" fill="#dedede"/>
<polygon points="103.31,462.52 119.36,472.65 125.05,472.65 125.05,469.62 106.29,457.78" fill="#000"/>
<rect x="107.58" y="461.11" width="3.5" height="3.8" fill="#dedede" transform="rotate(32.3 109.33 463.01)"/>
<rect x="111.91" y="463.84" width="3.5" height="3.8" fill="#dedede" transform="rotate(32.3 113.66 465.74)"/>
<rect x="116.23" y="466.57" width="3.5" height="3.8" fill="#dedede" transform="rotate(32.3 117.98 468.47)"/>
<circle cx="104.80" cy="460.15" r="2.3" fill="#000" stroke="#ececec" stroke-width="0.9"/>
<circle cx="104.80" cy="453.60" r="1.7" fill="#808080" stroke="#202020" stroke-width="0.8"/>
<rect x="125.80" y="457.50" width="19.80" height="5.3" fill="#000"/>
<rect x="128.50" y="459.15" width="12.30" height="2" fill="#808080"/>
<rect x="146.40" y="457.50" width="19.80" height="5.3" fill="#000"/>
<rect x="151.50" y="459.15" width="12.50" height="2" fill="#ffe000"/>
<polygon points="147.49,462.52 166.25,450.68 166.25,447.35 161.04,447.35 144.51,457.78" fill="#000"/>
<line x1="151.77" y1="456.51" x2="162.07" y2="450.01" stroke="#808080" stroke-width="2" stroke-linecap="butt"/>
<circle cx="146.00" cy="460.15" r="2.3" fill="#000" stroke="#ececec" stroke-width="0.9"/>
<circle cx="146.30" cy="467.00" r="1.7" fill="#808080" stroke="#202020" stroke-width="0.8"/>
<rect x="127.30" y="464.70" width="15.00" height="6.40" fill="#fff"/>
<text x="134.80" y="470.10" font-size="6.8" font-family="DejaVu Sans Condensed, DejaVu Sans, Liberation Sans, sans-serif" text-anchor="middle" fill="#2c2c3c">777</text>
<rect x="167.00" y="457.30" width="40.40" height="5.7" fill="#000"/>
<rect x="169.88" y="458.25" width="3.45" height="3.8" fill="#dedede"/>
<rect x="174.92" y="458.25" width="3.45" height="3.8" fill="#dedede"/>
<rect x="179.96" y="458.25" width="3.45" height="3.8" fill="#dedede"/>
<rect x="185.00" y="458.25" width="3.45" height="3.8" fill="#dedede"/>
<rect x="190.04" y="458.25" width="3.45" height="3.8" fill="#dedede"/>
<rect x="195.08" y="458.25" width="3.45" height="3.8" fill="#dedede"/>
<rect x="200.12" y="458.25" width="3.45" height="3.8" fill="#dedede"/>
<rect x="208.20" y="457.30" width="40.40" height="5.7" fill="#000"/>
<rect x="211.08" y="458.25" width="3.45" height="3.8" fill="#dedede"/>
<rect x="216.12" y="458.25" width="3.45" height="3.8" fill="#dedede"/>
<rect x="221.16" y="458.25" width="3.45" height="3.8" fill="#dedede"/>
<rect x="226.20" y="458.25" width="3.45" height="3.8" fill="#dedede"/>
<rect x="231.24" y="458.25" width="3.45" height="3.8" fill="#dedede"/>
<rect x="236.28" y="458.25" width="3.45" height="3.8" fill="#dedede"/>
<rect x="241.32" y="458.25" width="3.45" height="3.8" fill="#dedede"/>
<rect x="249.40" y="457.30" width="40.40" height="5.7" fill="#000"/>
<rect x="252.28" y="458.25" width="3.45" height="3.8" fill="#dedede"/>
<rect x="257.31" y="458.25" width="3.45" height="3.8" fill="#dedede"/>
<rect x="262.36" y="458.25" width="3.45" height="3.8" fill="#dedede"/>
<rect x="267.39" y="458.25" width="3.45" height="3.8" fill="#dedede"/>
<rect x="272.44" y="458.25" width="3.45" height="3.8" fill="#dedede"/>
<rect x="277.48" y="458.25" width="3.45" height="3.8" fill="#dedede"/>
<rect x="282.51" y="458.25" width="3.45" height="3.8" fill="#dedede"/>
<rect x="290.60" y="457.30" width="40.40" height="5.7" fill="#000"/>
<rect x="293.48" y="458.25" width="3.45" height="3.8" fill="#dedede"/>
<rect x="298.52" y="458.25" width="3.45" height="3.8" fill="#dedede"/>
<rect x="303.56" y="458.25" width="3.45" height="3.8" fill="#dedede"/>
<rect x="308.60" y="458.25" width="3.45" height="3.8" fill="#dedede"/>
<rect x="313.64" y="458.25" width="3.45" height="3.8" fill="#dedede"/>
<rect x="318.68" y="458.25" width="3.45" height="3.8" fill="#dedede"/>
<rect x="323.72" y="458.25" width="3.45" height="3.8" fill="#dedede"/>
<rect x="331.90" y="455.30" width="3.5" height="9.6" fill="#000"/>
<polygon points="147.49,483.78 130.96,473.35 125.75,473.35 125.75,476.68 144.51,488.52" fill="#000"/>
<rect x="139.72" y="481.39" width="3.5" height="3.8" fill="#dedede" transform="rotate(-147.7 141.47 483.29)"/>
<rect x="135.39" y="478.66" width="3.5" height="3.8" fill="#dedede" transform="rotate(-147.7 137.14 480.56)"/>
<rect x="131.07" y="475.93" width="3.5" height="3.8" fill="#dedede" transform="rotate(-147.7 132.82 477.83)"/>
<rect x="146.40" y="483.30" width="19.80" height="5.7" fill="#000"/>
<rect x="150.03" y="484.25" width="3.45" height="3.8" fill="#dedede"/>
<rect x="155.08" y="484.25" width="3.45" height="3.8" fill="#dedede"/>
<rect x="160.12" y="484.25" width="3.45" height="3.8" fill="#dedede"/>
<rect x="167.00" y="483.30" width="40.40" height="5.7" fill="#000"/>
<rect x="169.88" y="484.25" width="3.45" height="3.8" fill="#dedede"/>
<rect x="174.92" y="484.25" width="3.45" height="3.8" fill="#dedede"/>
<rect x="179.96" y="484.25" width="3.45" height="3.8" fill="#dedede"/>
<rect x="185.00" y="484.25" width="3.45" height="3.8" fill="#dedede"/>
<rect x="190.04" y="484.25" width="3.45" height="3.8" fill="#dedede"/>
<rect x="195.08" y="484.25" width="3.45" height="3.8" fill="#dedede"/>
<rect x="200.12" y="484.25" width="3.45" height="3.8" fill="#dedede"/>
<rect x="208.20" y="483.30" width="40.40" height="5.7" fill="#000"/>
<rect x="211.08" y="484.25" width="3.45" height="3.8" fill="#dedede"/>
<rect x="216.12" y="484.25" width="3.45" height="3.8" fill="#dedede"/>
<rect x="221.16" y="484.25" width="3.45" height="3.8" fill="#dedede"/>
<rect x="226.20" y="484.25" width="3.45" height="3.8" fill="#dedede"/>
<rect x="231.24" y="484.25" width="3.45" height="3.8" fill="#dedede"/>
<rect x="236.28" y="484.25" width="3.45" height="3.8" fill="#dedede"/>
<rect x="241.32" y="484.25" width="3.45" height="3.8" fill="#dedede"/>
<rect x="249.40" y="483.30" width="40.40" height="5.7" fill="#000"/>
<rect x="252.28" y="484.25" width="3.45" height="3.8" fill="#dedede"/>
<rect x="257.31" y="484.25" width="3.45" height="3.8" fill="#dedede"/>
<rect x="262.36" y="484.25" width="3.45" height="3.8" fill="#dedede"/>
<rect x="267.39" y="484.25" width="3.45" height="3.8" fill="#dedede"/>
<rect x="272.44" y="484.25" width="3.45" height="3.8" fill="#dedede"/>
<rect x="277.48" y="484.25" width="3.45" height="3.8" fill="#dedede"/>
<rect x="282.51" y="484.25" width="3.45" height="3.8" fill="#dedede"/>
<rect x="290.60" y="483.30" width="40.40" height="5.7" fill="#000"/>
<rect x="293.48" y="484.25" width="3.45" height="3.8" fill="#dedede"/>
<rect x="298.52" y="484.25" width="3.45" height="3.8" fill="#dedede"/>
<rect x="303.56" y="484.25" width="3.45" height="3.8" fill="#dedede"/>
<rect x="308.60" y="484.25" width="3.45" height="3.8" fill="#dedede"/>
<rect x="313.64" y="484.25" width="3.45" height="3.8" fill="#dedede"/>
<rect x="318.68" y="484.25" width="3.45" height="3.8" fill="#dedede"/>
<rect x="323.72" y="484.25" width="3.45" height="3.8" fill="#dedede"/>
<rect x="331.90" y="481.30" width="3.5" height="9.6" fill="#000"/>
<rect x="373.00" y="447.60" width="40.80" height="25.40" fill="#00a000"/>
<circle cx="381.2" cy="460.4" r="2.7" fill="#808080" stroke="#303030" stroke-width="0.8"/>
<rect x="393.2" y="456.6" width="16.6" height="7.6" fill="#fff" stroke="#103010" stroke-width="0.8"/><text x="401.5" y="463.2" font-size="7" text-anchor="middle" fill="#303050">0011</text>
<rect x="374.4" y="465.4" width="13.6" height="6" fill="#fff" stroke="#103010" stroke-width="0.8"/><text x="381.2" y="470.6" font-size="5.2" font-weight="bold" text-anchor="middle" fill="#202020">FHT</text>
<rect x="702.60" y="379.50" width="19.80" height="5.3" fill="#000"/>
<rect x="708.30" y="381.15" width="8.70" height="2" fill="#ffe000"/>
<rect x="723.20" y="379.50" width="19.80" height="5.3" fill="#000"/>
<rect x="728.40" y="381.15" width="9.00" height="2" fill="#808080"/>
<polygon points="724.29,379.78 707.76,369.35 702.55,369.35 702.55,372.68 721.31,384.52" fill="#000"/>
<line x1="716.62" y1="378.25" x2="708.38" y2="373.05" stroke="#808080" stroke-width="2" stroke-linecap="butt"/>
<polygon points="721.31,384.52 737.36,394.65 743.05,394.65 743.05,391.62 724.29,379.78" fill="#000"/>
<line x1="728.98" y1="386.05" x2="737.22" y2="391.25" stroke="#ffe000" stroke-width="2" stroke-linecap="butt"/>
<path d="M717.30,386.20 L725.30,387.20 M720.30,376.80 L728.30,377.80" stroke="#303030" stroke-width="0.6" fill="none"/>
<circle cx="722.80" cy="382.15" r="2.55" fill="#000" stroke="#ececec" stroke-width="1.0"/>
<circle cx="731.80" cy="376.00" r="1.7" fill="#808080" stroke="#202020" stroke-width="0.8"/>
<circle cx="718.80" cy="389.00" r="1.7" fill="#808080" stroke="#202020" stroke-width="0.8"/>
<rect x="704.00" y="386.80" width="11.00" height="6.60" fill="#fff"/>
<text x="709.50" y="392.40" font-size="6.8" font-family="DejaVu Sans Condensed, DejaVu Sans, Liberation Sans, sans-serif" text-anchor="middle" fill="#2c2c3c">22</text>
<rect x="743.80" y="379.50" width="40.40" height="5.3" fill="#000"/>
<rect x="755.90" y="381.15" width="16.20" height="2" fill="#808080"/>
<rect x="785.00" y="379.50" width="40.40" height="5.3" fill="#000"/>
<rect x="798.20" y="381.15" width="13.20" height="2" fill="#808080"/>
<circle cx="818.60" cy="382.00" r="2.4" fill="#707070" stroke="#dedede" stroke-width="0.9"/>
<rect x="826.20" y="379.30" width="40.40" height="5.7" fill="#000"/>
<rect x="829.07" y="380.25" width="3.45" height="3.8" fill="#dedede"/>
<rect x="834.11" y="380.25" width="3.45" height="3.8" fill="#dedede"/>
<rect x="839.15" y="380.25" width="3.45" height="3.8" fill="#dedede"/>
<rect x="844.19" y="380.25" width="3.45" height="3.8" fill="#dedede"/>
<rect x="849.23" y="380.25" width="3.45" height="3.8" fill="#dedede"/>
<rect x="854.27" y="380.25" width="3.45" height="3.8" fill="#dedede"/>
<rect x="859.31" y="380.25" width="3.45" height="3.8" fill="#dedede"/>
<rect x="867.50" y="377.30" width="3.5" height="9.6" fill="#000"/>
<rect x="796.90" y="387.40" width="18.20" height="6.40" fill="#fff"/>
<text x="806.00" y="392.80" font-size="6.3" font-family="DejaVu Sans Condensed, DejaVu Sans, Liberation Sans, sans-serif" text-anchor="middle" fill="#2c2c3c">5104</text>
<polygon points="661.35,343.35 661.35,346.53 696.40,368.65 701.85,368.65 701.85,365.47 666.80,343.35" fill="#000"/>
<line x1="674.60" y1="351.58" x2="689.02" y2="360.68" stroke="#808080" stroke-width="2" stroke-linecap="butt"/>
<rect x="690.00" y="371.20" width="10.00" height="6.60" fill="#fff"/>
<text x="695.00" y="376.80" font-size="6.8" font-family="DejaVu Sans Condensed, DejaVu Sans, Liberation Sans, sans-serif" text-anchor="middle" fill="#2c2c3c">23</text>
<polygon points="765.49,405.78 748.96,395.35 743.75,395.35 743.75,398.68 762.51,410.52" fill="#000"/>
<rect x="762.40" y="405.50" width="21.80" height="5.3" fill="#000"/>
<polyline points="753.40,401.30 764.50,408.00 772.00,408.00" fill="none" stroke="#ffe000" stroke-width="2"/>
<rect x="785.00" y="405.50" width="40.40" height="5.3" fill="#000"/>
<rect x="798.20" y="407.15" width="13.20" height="2" fill="#ffe000"/>
<circle cx="818.60" cy="408.00" r="2.4" fill="#707070" stroke="#dedede" stroke-width="0.9"/>
<rect x="826.20" y="405.30" width="40.40" height="5.7" fill="#000"/>
<rect x="829.07" y="406.25" width="3.45" height="3.8" fill="#dedede"/>
<rect x="834.11" y="406.25" width="3.45" height="3.8" fill="#dedede"/>
<rect x="839.15" y="406.25" width="3.45" height="3.8" fill="#dedede"/>
<rect x="844.19" y="406.25" width="3.45" height="3.8" fill="#dedede"/>
<rect x="849.23" y="406.25" width="3.45" height="3.8" fill="#dedede"/>
<rect x="854.27" y="406.25" width="3.45" height="3.8" fill="#dedede"/>
<rect x="859.31" y="406.25" width="3.45" height="3.8" fill="#dedede"/>
<rect x="867.50" y="403.30" width="3.5" height="9.6" fill="#000"/>
<rect x="796.90" y="413.40" width="18.20" height="6.40" fill="#fff"/>
<text x="806.00" y="418.80" font-size="6.3" font-family="DejaVu Sans Condensed, DejaVu Sans, Liberation Sans, sans-serif" text-anchor="middle" fill="#2c2c3c">5103</text>
<rect x="796.90" y="439.40" width="18.20" height="6.40" fill="#fff"/>
<text x="806.00" y="444.80" font-size="6.3" font-family="DejaVu Sans Condensed, DejaVu Sans, Liberation Sans, sans-serif" text-anchor="middle" fill="#2c2c3c">5102</text>
<polygon points="661.35,421.35 661.35,424.53 696.40,446.65 701.85,446.65 701.85,443.47 666.80,421.35" fill="#000"/>
<line x1="674.60" y1="429.58" x2="689.02" y2="438.68" stroke="#808080" stroke-width="2" stroke-linecap="butt"/>
<polygon points="724.29,457.78 707.76,447.35 702.55,447.35 702.55,450.68 721.31,462.52" fill="#000"/>
<rect x="721.20" y="457.50" width="21.80" height="5.3" fill="#000"/>
<polyline points="714.20,454.60 723.30,460.00 730.80,460.00" fill="none" stroke="#808080" stroke-width="2"/>
<rect x="743.80" y="457.50" width="40.40" height="5.3" fill="#000"/>
<rect x="755.90" y="459.15" width="16.20" height="2" fill="#808080"/>
<rect x="785.00" y="457.50" width="40.40" height="5.3" fill="#000"/>
<rect x="798.20" y="459.15" width="13.20" height="2" fill="#808080"/>
<circle cx="818.60" cy="460.00" r="2.4" fill="#707070" stroke="#dedede" stroke-width="0.9"/>
<rect x="826.20" y="457.30" width="40.40" height="5.7" fill="#000"/>
<rect x="829.07" y="458.25" width="3.45" height="3.8" fill="#dedede"/>
<rect x="834.11" y="458.25" width="3.45" height="3.8" fill="#dedede"/>
<rect x="839.15" y="458.25" width="3.45" height="3.8" fill="#dedede"/>
<rect x="844.19" y="458.25" width="3.45" height="3.8" fill="#dedede"/>
<rect x="849.23" y="458.25" width="3.45" height="3.8" fill="#dedede"/>
<rect x="854.27" y="458.25" width="3.45" height="3.8" fill="#dedede"/>
<rect x="859.31" y="458.25" width="3.45" height="3.8" fill="#dedede"/>
<rect x="867.50" y="455.30" width="3.5" height="9.6" fill="#000"/>
<rect x="796.90" y="465.40" width="18.20" height="6.40" fill="#fff"/>
<text x="806.00" y="470.80" font-size="6.3" font-family="DejaVu Sans Condensed, DejaVu Sans, Liberation Sans, sans-serif" text-anchor="middle" fill="#2c2c3c">5101</text>
    </svg>
  </div>
  <div style="left:0;top:569px;width:1.7px;height:11.6px;background:#454545"></div>
  <div id="hscroll">
    <div style="left:0;top:0;width:10.4px;height:10.6px;background:#dfe0e8;border-left:1px solid #fff;border-top:1px solid #fff;border-right:1px solid #555;border-bottom:1px solid #555"></div>
    <svg width="10" height="10" style="left:0;top:0"><path d="M6.6,2.6 L3,5.2 L6.6,7.8 Z" fill="#000"/></svg>
    <div style="left:10.6px;top:0;width:853.4px;height:10.6px;background:#dfe0e8;border-left:1px solid #fff;border-top:1px solid #fff;border-right:1px solid #555;border-bottom:1px solid #555"></div>
    <div style="left:880.3px;top:0;width:10.8px;height:10.6px;background:#dfe0e8;border-left:1px solid #fff;border-top:1px solid #fff;border-right:1px solid #555;border-bottom:1px solid #555"></div>
    <svg width="10" height="10" style="left:881px;top:0"><path d="M3.6,2.6 L7.2,5.2 L3.6,7.8 Z" fill="#000"/></svg>
  </div>
  <div id="status">
    <span class="t" style="left:4px;top:5px;font-size:8.6px;color:#111">Hinweise</span>
    <div style="left:67.6px;top:1.2px;width:826px;height:13.6px;background:#fff;border-left:1.4px solid #444;border-top:1.4px solid #444;border-right:1px solid #ddd;border-bottom:1px solid #ddd"></div>
    <span class="t" style="left:72.3px;top:4.2px;font-family:'Liberation Mono','DejaVu Sans Mono',monospace;font-size:8.4px;color:#6a6a6a">19:28:10.146 Fahrstraße 'A - 2' eingestellt</span>
    <div style="left:882px;top:2.4px;width:11px;height:11.8px;background:#dfe0e8;border-left:1px solid #fff;border-top:1px solid #fff;border-right:1px solid #333;border-bottom:1px solid #333"></div>
    <svg width="10" height="10" style="left:882.6px;top:3.6px"><path d="M2.4,3 L8,3 L5.2,6.6 Z" fill="#000"/></svg>
  </div>
</div>
<style>
.win{border-radius:4px 4px 3px 3px;overflow:hidden;box-shadow:0 0 0 0.8px #6b5a4e}
.wt{left:0;top:0;width:100%;background:linear-gradient(#fff 0,#fbf8f5 1px,#f1e9e3 2.4px,#ece3db 50%,#e5d9ce 100%)}
.wt .cap{left:0;width:100%;text-align:center;font-weight:bold;font-size:9.72px;white-space:pre;color:#3a3a3a}
.btn{background:#e4e4e4;border-left:1px solid #fafafa;border-top:1px solid #fafafa;border-right:1px solid #858585;border-bottom:1px solid #858585;font-size:8.95px;text-align:center;color:#222;white-space:pre}
.seg{top:141px;width:36.7px;height:65.7px;background:#7c0000}
</style>
<!-- ============ Lokomotiv-Controller ============ -->
<div id="lok" class="abs win" style="left:152.6px;top:76.4px;width:280px;height:203px;background:#e1e1e1;box-shadow:0 0 0 0.8px #4a362b">
  <div class="wt" style="height:16.3px;background:linear-gradient(#765a4c 0,#6a4f41 2px,#5c4235 50%,#4f382d)">
    <div class="knob" style="left:7px;top:4.6px;width:6.4px;height:6.4px;background:#6f5648;border-color:#8a7466"></div>
    <div class="cap" style="top:2.6px;color:#fff;left:-0.6px">Lokomotiv-Controller (802)</div>
    <div class="wbtn" style="left:261.4px;top:2.6px;width:15.6px;height:11px;border:1px solid #8d7567;border-radius:2px;background:linear-gradient(#6b5043,#50392d)"><svg width="14" height="10" style="left:0;top:0"><path d="M4,1.6 L9.8,7.2 M9.8,1.6 L4,7.2" stroke="#fff" stroke-width="1.9"/></svg></div>
  </div>
  <span class="t" style="left:3px;top:20.6px;font-size:9.05px;color:#b0b0b0;text-shadow:0.7px 0.7px 0 #fafafa">Handregler inaktiv</span>
  <span class="t" style="left:155.7px;top:21.6px;font-family:'DejaVu Sans Mono','Liberation Mono',monospace;font-weight:bold;font-size:17.9px;color:#f00000">802</span>
  <span class="t" style="left:4px;top:51px;font-size:8.95px;color:#222">Lok-Adresse:</span>
  <span class="t" style="left:131.4px;top:51px;font-size:8.95px;color:#222">Geschwindigkeit:</span>
  <svg width="280" height="70" viewBox="152.6 140 280 70" style="left:0;top:63.6px"><rect x="154.90" y="141.05" width="36.7" height="65.7" fill="#7c0000"/>
<polygon points="159.00,144.75 162.70,141.05 183.80,141.05 187.50,144.75 183.80,148.45 162.70,148.45" fill="#ff0404"/>
<polygon points="187.90,145.50 191.60,149.20 191.60,170.05 187.90,173.75 184.20,170.05 184.20,149.20" fill="#ff0404"/>
<polygon points="187.90,174.05 191.60,177.75 191.60,198.60 187.90,202.30 184.20,198.60 184.20,177.75" fill="#ff0404"/>
<polygon points="159.00,203.05 162.70,199.35 183.80,199.35 187.50,203.05 183.80,206.75 162.70,206.75" fill="#ff0404"/>
<polygon points="158.60,174.05 162.30,177.75 162.30,198.60 158.60,202.30 154.90,198.60 154.90,177.75" fill="#ff0404"/>
<polygon points="158.60,145.50 162.30,149.20 162.30,170.05 158.60,173.75 154.90,170.05 154.90,149.20" fill="#ff0404"/>
<rect x="193.05" y="141.05" width="36.7" height="65.7" fill="#7c0000"/>
<polygon points="197.15,144.75 200.85,141.05 221.95,141.05 225.65,144.75 221.95,148.45 200.85,148.45" fill="#ff0404"/>
<polygon points="226.05,145.50 229.75,149.20 229.75,170.05 226.05,173.75 222.35,170.05 222.35,149.20" fill="#ff0404"/>
<polygon points="226.05,174.05 229.75,177.75 229.75,198.60 226.05,202.30 222.35,198.60 222.35,177.75" fill="#ff0404"/>
<polygon points="197.15,203.05 200.85,199.35 221.95,199.35 225.65,203.05 221.95,206.75 200.85,206.75" fill="#ff0404"/>
<polygon points="196.75,174.05 200.45,177.75 200.45,198.60 196.75,202.30 193.05,198.60 193.05,177.75" fill="#ff0404"/>
<polygon points="196.75,145.50 200.45,149.20 200.45,170.05 196.75,173.75 193.05,170.05 193.05,149.20" fill="#ff0404"/>
<polygon points="197.15,173.90 200.85,170.20 221.95,170.20 225.65,173.90 221.95,177.60 200.85,177.60" fill="#ff0404"/>
<rect x="231.20" y="141.05" width="36.7" height="65.7" fill="#7c0000"/>
<polygon points="235.30,144.75 239.00,141.05 260.10,141.05 263.80,144.75 260.10,148.45 239.00,148.45" fill="#ff0404"/>
<polygon points="264.20,145.50 267.90,149.20 267.90,170.05 264.20,173.75 260.50,170.05 260.50,149.20" fill="#ff0404"/>
<polygon points="264.20,174.05 267.90,177.75 267.90,198.60 264.20,202.30 260.50,198.60 260.50,177.75" fill="#ff0404"/>
<polygon points="235.30,203.05 239.00,199.35 260.10,199.35 263.80,203.05 260.10,206.75 239.00,206.75" fill="#ff0404"/>
<polygon points="234.90,174.05 238.60,177.75 238.60,198.60 234.90,202.30 231.20,198.60 231.20,177.75" fill="#ff0404"/>
<polygon points="234.90,145.50 238.60,149.20 238.60,170.05 234.90,173.75 231.20,170.05 231.20,149.20" fill="#ff0404"/>
<rect x="269.35" y="141.05" width="36.7" height="65.7" fill="#7c0000"/>
<polygon points="273.45,144.75 277.15,141.05 298.25,141.05 301.95,144.75 298.25,148.45 277.15,148.45" fill="#ff0404"/>
<polygon points="302.35,145.50 306.05,149.20 306.05,170.05 302.35,173.75 298.65,170.05 298.65,149.20" fill="#ff0404"/>
<polygon points="273.45,173.90 277.15,170.20 298.25,170.20 301.95,173.90 298.25,177.60 277.15,177.60" fill="#ff0404"/>
<polygon points="273.05,174.05 276.75,177.75 276.75,198.60 273.05,202.30 269.35,198.60 269.35,177.75" fill="#ff0404"/>
<polygon points="273.45,203.05 277.15,199.35 298.25,199.35 301.95,203.05 298.25,206.75 277.15,206.75" fill="#ff0404"/>
<rect x="316.00" y="141.05" width="36.7" height="65.7" fill="#7c0000"/>
<polygon points="320.10,144.75 323.80,141.05 344.90,141.05 348.60,144.75 344.90,148.45 323.80,148.45" fill="#ff0404"/>
<polygon points="349.00,145.50 352.70,149.20 352.70,170.05 349.00,173.75 345.30,170.05 345.30,149.20" fill="#ff0404"/>
<polygon points="349.00,174.05 352.70,177.75 352.70,198.60 349.00,202.30 345.30,198.60 345.30,177.75" fill="#ff0404"/>
<polygon points="320.10,203.05 323.80,199.35 344.90,199.35 348.60,203.05 344.90,206.75 323.80,206.75" fill="#ff0404"/>
<polygon points="319.70,174.05 323.40,177.75 323.40,198.60 319.70,202.30 316.00,198.60 316.00,177.75" fill="#ff0404"/>
<polygon points="319.70,145.50 323.40,149.20 323.40,170.05 319.70,173.75 316.00,170.05 316.00,149.20" fill="#ff0404"/>
<rect x="354.15" y="141.05" width="36.7" height="65.7" fill="#7c0000"/>
<polygon points="358.25,144.75 361.95,141.05 383.05,141.05 386.75,144.75 383.05,148.45 361.95,148.45" fill="#ff0404"/>
<polygon points="387.15,145.50 390.85,149.20 390.85,170.05 387.15,173.75 383.45,170.05 383.45,149.20" fill="#ff0404"/>
<polygon points="387.15,174.05 390.85,177.75 390.85,198.60 387.15,202.30 383.45,198.60 383.45,177.75" fill="#ff0404"/>
<polygon points="358.25,203.05 361.95,199.35 383.05,199.35 386.75,203.05 383.05,206.75 361.95,206.75" fill="#ff0404"/>
<polygon points="357.85,174.05 361.55,177.75 361.55,198.60 357.85,202.30 354.15,198.60 354.15,177.75" fill="#ff0404"/>
<polygon points="357.85,145.50 361.55,149.20 361.55,170.05 357.85,173.75 354.15,170.05 354.15,149.20" fill="#ff0404"/>
<rect x="392.30" y="141.05" width="36.7" height="65.7" fill="#7c0000"/>
<polygon points="396.40,144.75 400.10,141.05 421.20,141.05 424.90,144.75 421.20,148.45 400.10,148.45" fill="#ff0404"/>
<polygon points="425.30,145.50 429.00,149.20 429.00,170.05 425.30,173.75 421.60,170.05 421.60,149.20" fill="#ff0404"/>
<polygon points="425.30,174.05 429.00,177.75 429.00,198.60 425.30,202.30 421.60,198.60 421.60,177.75" fill="#ff0404"/>
<polygon points="396.40,203.05 400.10,199.35 421.20,199.35 424.90,203.05 421.20,206.75 400.10,206.75" fill="#ff0404"/>
<polygon points="396.00,174.05 399.70,177.75 399.70,198.60 396.00,202.30 392.30,198.60 392.30,177.75" fill="#ff0404"/>
<polygon points="396.00,145.50 399.70,149.20 399.70,170.05 396.00,173.75 392.30,170.05 392.30,149.20" fill="#ff0404"/></svg>
  <div style="left:2.4px;top:131.6px;width:274.4px;height:13.2px;background:#00d800"></div>
  <svg width="280" height="14" style="left:0;top:131.6px"><path d="M3.2,6.9 L13.4,1.2 L13.4,12.6 Z" fill="#12f612"/><path d="M3.2,6.9 L13.4,1.2" stroke="#9cff9c" stroke-width="0.8" fill="none"/><path d="M3.2,6.9 L13.4,12.6 L13.4,1.2" stroke="#0a9a0a" stroke-width="0.8" fill="none"/>
<rect x="15" y="1.2" width="3.6" height="11.4" fill="#12f612"/><path d="M15.2,12.6 V1.4 H18.6" stroke="#9cff9c" stroke-width="0.8" fill="none"/><path d="M18.6,1.4 V12.4 H15.2" stroke="#0a9a0a" stroke-width="0.7" fill="none"/>
<path d="M276.4,6.9 L266.4,1.2 L266.4,12.6 Z" fill="#12f612"/><path d="M266.4,12.6 L266.4,1.2 L276.4,6.9" stroke="#9cff9c" stroke-width="0.8" fill="none"/><path d="M276.4,6.9 L266.4,12.6" stroke="#0a9a0a" stroke-width="0.8" fill="none"/></svg>
  <!-- buttons -->
  <div class="btn" style="left:4px;top:149.8px;width:100.8px;height:13.2px;line-height:12px">Lok wechseln (&lt;-)</div>
  <div class="btn" style="left:109.6px;top:149.8px;width:32px;height:13.2px;line-height:12px;font-size:7.2px;font-weight:bold">&lt;</div>
  <div class="btn" style="left:145.6px;top:149.8px;width:32px;height:13.2px;line-height:12px">O</div>
  <div class="btn" style="left:180px;top:147.6px;width:50px;height:16.4px;line-height:15.8px;border:1.2px solid #333;box-shadow:inset 1px 1px 0 #fafafa,inset -1px -1px 0 #8c8c8c;font-size:7.2px;font-weight:bold">&lt;&gt;</div>
  <div class="btn" style="left:233px;top:149.8px;width:41.4px;height:13.2px;line-height:12px;font-size:7.2px;font-weight:bold">&gt;</div>
  <div class="btn" style="left:4px;top:167.8px;width:100.8px;height:13.2px;line-height:12px">Lok wechseln (-&gt;)</div>
  <div class="btn" style="left:109.6px;top:167.8px;width:32px;height:13.2px;line-height:12px">F1</div>
  <div class="btn" style="left:145.6px;top:167.8px;width:32px;height:13.2px;line-height:12px">F2</div>
  <div class="btn" style="left:181.6px;top:167.8px;width:92.8px;height:13.2px;line-height:12px">Funktion</div>
  <div class="btn" style="left:4px;top:185.8px;width:100.8px;height:13.2px;line-height:12px">Schließen</div>
  <div class="btn" style="left:109.6px;top:185.8px;width:32px;height:13.2px;line-height:12px">F3</div>
  <div class="btn" style="left:145.6px;top:185.8px;width:32px;height:13.2px;line-height:12px">F4</div>
  <div class="btn" style="left:181.6px;top:185.8px;width:92.8px;height:13.2px;line-height:12px">Funktion aus</div>
  <div style="left:0;top:16.3px;width:2.2px;height:190px;background:#f1ebe5"></div>
  <div style="right:0;top:16.3px;width:1.6px;height:190px;background:#f1ebe5"></div>
  <div style="left:0;bottom:0;width:100%;height:2.6px;background:#f1ebe5"></div>
  <svg width="14" height="18" style="left:157.6px;top:166px"><path d="M2.2,1.2 L2.8,12.6 L5.2,10.4 L7,14.8 L9,14 L7.2,9.7 L10.6,9.5 Z" fill="#000" opacity="0.55"/><path d="M1.5,0.4 L1.5,11.8 L4.2,9.6 L6,14 L8,13.2 L6.2,8.9 L9.8,8.7 Z" fill="#fff" stroke="#222" stroke-width="0.7"/></svg>
</div>
<!-- ============ J-Man ============ -->
<div id="jman" class="abs win" style="left:504.5px;top:94.4px;width:288.8px;height:172.9px;background:#e2e2e2;border-radius:4px">
  <div class="wt" style="height:16px">
    <div class="knob" style="left:7.6px;top:3.6px;width:6.6px;height:6.6px"></div>
    <div class="cap" style="top:2.2px;left:-18.4px">J-Man: .default.jman</div>
    <div class="wbtn" style="left:233.4px;top:2px;width:16px;height:12px"><svg width="14" height="10" style="left:0;top:0"><rect x="4" y="6.2" width="5.6" height="1.5" fill="#222"/></svg></div>
    <div class="wbtn" style="left:251.4px;top:2px;width:16px;height:12px"><svg width="14" height="10" style="left:0;top:0"><rect x="4.2" y="2.2" width="5.4" height="5" fill="none" stroke="#222" stroke-width="1"/><rect x="4.2" y="2" width="5.4" height="1.4" fill="#222"/></svg></div>
    <div class="wbtn" style="left:269.2px;top:2px;width:16px;height:12px"><svg width="14" height="10" style="left:0;top:0"><path d="M4,2 L9.6,7.2 M9.6,2 L4,7.2" stroke="#222" stroke-width="1.7"/></svg></div>
  </div>
  <div style="left:0;top:16.4px;width:100%;height:17px;background:#e2e2e2;border-bottom:1px solid #7a7a7a"></div>
  <span class="t" style="left:9.4px;top:21.2px;font-size:8.7px;color:#222">Datei</span>
  <span class="t" style="left:49px;top:21.2px;font-size:8.7px;color:#222">SRCP-Server</span>
  <span class="t" style="left:119.6px;top:21.2px;font-size:8.7px;color:#222">Daten</span>
  <span class="t" style="left:163.2px;top:21.2px;font-size:8.7px;color:#222">Spielen</span>
  <span class="t" style="left:212.6px;top:21.2px;font-size:8.7px;color:#222">Extern</span>
  <span class="t" style="left:257.6px;top:21.2px;font-size:8.7px;color:#222">Hilfe</span>
  <span class="t" style="left:4.8px;top:39.2px;font-size:8.7px;color:#222">Lokomotiven:</span>
  <div style="left:3.4px;top:55.2px;width:282.6px;height:102px;background:#fff;border-left:1.4px solid #555;border-top:1.4px solid #555;border-right:1px solid #f4f4f4;border-bottom:1px solid #f4f4f4"></div>
  <div style="left:5.4px;top:57.7px;width:277.8px;height:9.1px;background:#000"></div>
  <span class="t" style="left:10.6px;top:58.9px;font-family:'DejaVu Sans Mono','Liberation Mono',monospace;font-weight:bold;font-size:7.25px;color:#fff">802: 802</span>
  <div style="left:136px;top:57.7px;width:147.2px;height:9.1px;overflow:hidden"><span class="t" style="left:1px;top:1.1px;font-family:'DejaVu Sans Mono','Liberation Mono',monospace;font-weight:bold;font-size:7.25px;color:#fff">(NMRA 4-Funktionsdek., 14-Bit-Adr.</span></div>
  <div style="left:4.4px;top:159.6px;width:281.4px;height:8.8px;background:#c4c4c4"></div>
  <div style="left:13.4px;top:159.8px;width:230.6px;height:8.4px;background:#e4e4e4;border-left:1px solid #fafafa;border-top:1px solid #fafafa;border-right:1px solid #8c8c8c;border-bottom:1px solid #8c8c8c"></div>
  <svg width="282" height="11" style="left:4.4px;top:158.6px"><path d="M1.4,5.4 L8,1.6 L8,9.2 Z" fill="#e4e4e4" stroke="#fff" stroke-width="0.8"/><path d="M280.6,5.4 L274.2,1.6 L274.2,9.2 Z" fill="#d4d4d4" stroke="#f4f4f4" stroke-width="0.8"/></svg>
<div style="left:0;top:16.4px;width:2.7px;height:160px;background:#efe6dd"></div>
  <div style="right:0;top:16.4px;width:2.9px;height:160px;background:#efe6dd"></div>
  <div style="left:0;bottom:0;width:100%;height:4.4px;background:#f1ebe5"></div>
</div>
<!-- ============ SRCP-Server Information ============ -->
<div id="srcp" class="abs win" style="left:466.2px;top:301.6px;width:230px;height:253px;background:#efefef;border-radius:4px">
  <div class="wt" style="height:16.4px">
    <div class="knob" style="left:6.6px;top:3.6px;width:7px;height:7px"></div>
    <div class="cap" style="top:2.6px;left:0.3px">SRCP-Server Information</div>
    <div class="wbtn" style="left:211px;top:1.6px;width:16.8px;height:12.6px"><svg width="16" height="12" style="left:0;top:0"><path d="M4.9,2.6 L10.3,8 M10.3,2.6 L4.9,8" stroke="#2c2c2c" stroke-width="1.6"/></svg></div>
  </div>
  <div style="left:9.2px;top:28.8px;width:212px;height:95.4px;border:1px solid #8a8a8a;box-shadow:inset 1px 1px 0 #fff,1px 1px 0 #fff"></div>
  <span class="t" style="left:14.6px;top:25px;font-size:8.7px;color:#222;background:#efefef;padding:0 1.4px">Kommandositzung</span>
  <div style="left:9.2px;top:137.8px;width:212px;height:79.4px;border:1px solid #8a8a8a;box-shadow:inset 1px 1px 0 #fff,1px 1px 0 #fff"></div>
  <span class="t" style="left:14.6px;top:134.2px;font-size:8.7px;color:#222;background:#efefef;padding:0 1.4px">Info-Sitzung</span>
  <span class="t" style="left:18.5px;top:41.7px;font-size:8.75px;color:#222">Server:</span>
<span class="t" style="left:165.8px;top:41.7px;font-size:8.75px;color:#222">Rocrail 2.0</span>
<span class="t" style="left:18.5px;top:58.4px;font-size:8.75px;color:#222">SRCP-Version:</span>
<span class="t" style="left:165.8px;top:58.4px;font-size:8.75px;color:#222">0.8.3</span>
<span class="t" style="left:18.5px;top:75.0px;font-size:8.75px;color:#222">Alternative SRCP-Version:</span>
<span class="t" style="left:18.5px;top:91.5px;font-size:8.75px;color:#222">Sitzungsidentifikationsnummer:</span>
<span class="t" style="left:165.8px;top:91.5px;font-size:8.75px;color:#222">1</span>
<span class="t" style="left:18.5px;top:108.0px;font-size:8.75px;color:#222">Standardnachrichten:</span>
<span class="t" style="left:165.8px;top:108.0px;font-size:8.75px;color:#222">Nein</span>
<span class="t" style="left:18.5px;top:151.2px;font-size:8.75px;color:#222">Server:</span>
<span class="t" style="left:165.8px;top:151.2px;font-size:8.75px;color:#222">Rocrail 2.0</span>
<span class="t" style="left:18.5px;top:167.8px;font-size:8.75px;color:#222">SRCP-Version:</span>
<span class="t" style="left:165.8px;top:167.8px;font-size:8.75px;color:#222">0.8.3</span>
<span class="t" style="left:18.5px;top:184.4px;font-size:8.75px;color:#222">Alternative SRCP-Version:</span>
<span class="t" style="left:18.5px;top:201.0px;font-size:8.75px;color:#222">Sitzungsidentifikationsnummer:</span>
<span class="t" style="left:165.8px;top:201.0px;font-size:8.75px;color:#222">2</span>
  <div style="left:85.2px;top:225.4px;width:59.4px;height:18.2px;background:#dfe0e8;border:1.2px solid #222;box-shadow:inset 1px 1px 0 #fff,inset -1px -1px 0 #777;text-align:center;font-size:8.7px;line-height:18.6px;color:#111">OK</div>
</div>

</body></html>
